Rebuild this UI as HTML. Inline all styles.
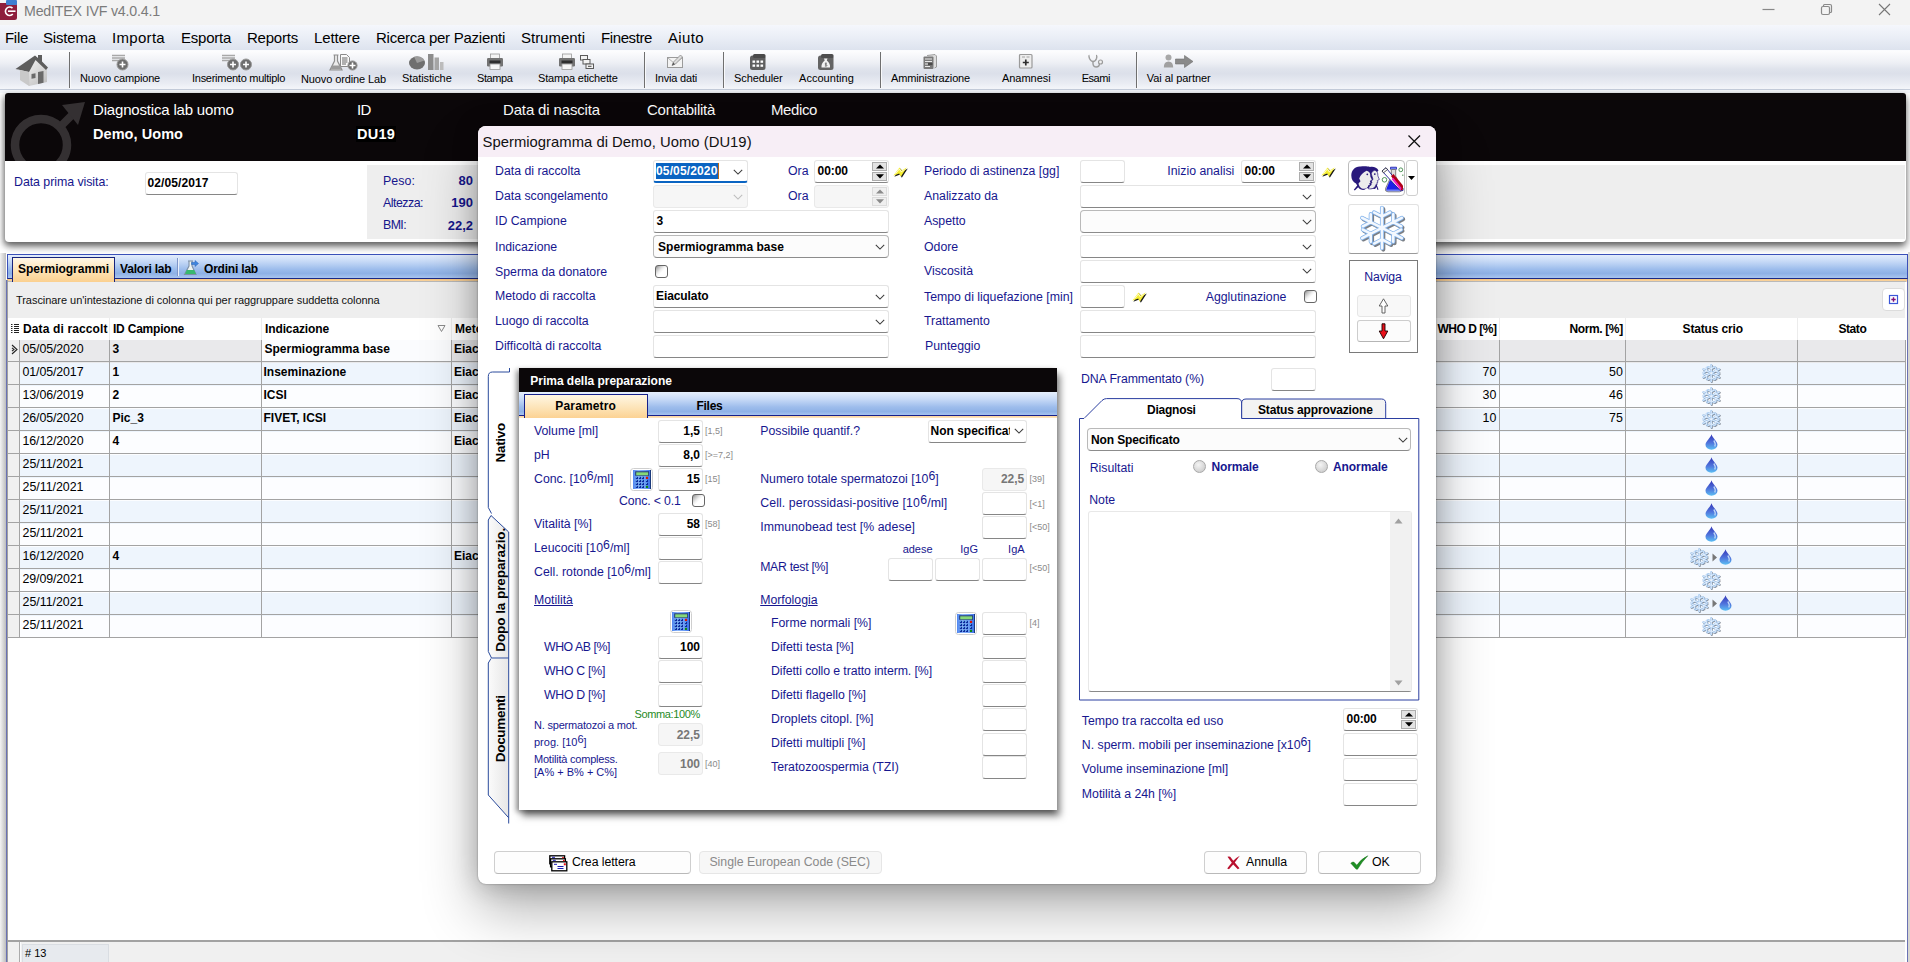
<!DOCTYPE html>
<html lang="it"><head><meta charset="utf-8"><title>MedITEX IVF v4.0.4.1</title>
<style>
html,body{margin:0;padding:0;}
body{width:1910px;height:962px;overflow:hidden;position:relative;background:#fff;font-family:"Liberation Sans",sans-serif;color:#000;}
.b{position:absolute;box-sizing:border-box;}
.t{position:absolute;white-space:pre;line-height:1;}
.inp{background:#fff;border:1px solid #e4e4e4;border-bottom:1px solid #868686;border-radius:3px;}
.dis{background:#f6f6f6;border:1px solid #e9e9e9;border-radius:3px;}
.cmbr{background:#fcfcfc;border:1px solid #b9b9b9;border-bottom:1px solid #8c8c8c;border-radius:4px;}

</style></head>
<body>
<div class="b" style="left:0px;top:0px;width:1910px;height:25px;background:#f3f3f3;"></div>
<svg class="b" style="left:0px;top:0px;" width="18" height="20" viewBox="0 0 18 20"><rect x="-4" y="3" width="21" height="17" rx="2.5" fill="#8e1f3c"/><rect x="6" y="0" width="11" height="5" rx="1" fill="#3f7fd0"/><path d="M12.5 8.2A4.2 4.2 0 1 0 12.8 14" stroke="#fff" stroke-width="1.6" fill="none"/><path d="M8 11.2H15.5" stroke="#fff" stroke-width="1.6"/></svg>
<span class="t" style="left:24px;top:4px;font-size:14.2px;letter-spacing:-0.18px;color:#7b7b7b;">MedITEX IVF v4.0.4.1</span>
<svg class="b" style="left:1755px;top:-1px;" width="155" height="24" viewBox="0 0 155 24"><path d="M7.500 10.500H19.500" stroke="#888" stroke-width="1.200"/><rect x="66.500" y="7.500" width="8" height="8" rx="1.500" fill="none" stroke="#8a8a8a" stroke-width="1.200"/><path d="M68.500 7.500V6.500Q68.500 5.500 69.500 5.500H75Q76.500 5.500 76.500 7V12.500Q76.500 13.500 75.500 13.500H74.500" fill="none" stroke="#8a8a8a" stroke-width="1.200"/><path d="M124 5L135 16M135 5L124 16" stroke="#777" stroke-width="1.100"/></svg>
<div class="b" style="left:0px;top:25px;width:1910px;height:25px;background:linear-gradient(#f5f7fc,#eaeef6 50%,#dde3ee);"></div>
<div class="b" style="left:0px;top:50px;width:1910px;height:1px;background:#fbfcfe;"></div>
<span class="t" style="left:5px;top:30px;font-size:15px;letter-spacing:-0.29px;color:#000;">File</span>
<span class="t" style="left:43px;top:30px;font-size:15px;letter-spacing:-0.17px;color:#000;">Sistema</span>
<span class="t" style="left:112px;top:30px;font-size:15px;letter-spacing:0.31px;color:#000;">Importa</span>
<span class="t" style="left:181px;top:30px;font-size:15px;letter-spacing:-0.24px;color:#000;">Esporta</span>
<span class="t" style="left:247px;top:30px;font-size:15px;letter-spacing:-0.22px;color:#000;">Reports</span>
<span class="t" style="left:314px;top:30px;font-size:15px;letter-spacing:-0.1px;color:#000;">Lettere</span>
<span class="t" style="left:376px;top:30px;font-size:15px;letter-spacing:-0.26px;color:#000;">Ricerca per Pazienti</span>
<span class="t" style="left:521px;top:30px;font-size:15px;letter-spacing:-0.02px;color:#000;">Strumenti</span>
<span class="t" style="left:601px;top:30px;font-size:15px;letter-spacing:-0.4px;color:#000;">Finestre</span>
<span class="t" style="left:668px;top:30px;font-size:15px;letter-spacing:0.36px;color:#000;">Aiuto</span>
<div class="b" style="left:0px;top:51px;width:1910px;height:39px;background:linear-gradient(#fdfdfe 0%,#eef0f5 30%,#dfe3ec 48%,#dce0ea 60%,#e9ecf3 85%,#f4f6fa 100%);border-bottom:1px solid #c5cddb;box-sizing:border-box;"></div>
<div class="b" style="left:0px;top:90px;width:1910px;height:3px;background:#f4f6fa;"></div>
<div class="b" style="left:69px;top:52px;width:1px;height:36px;background:#6f6f6f;"></div>
<div class="b" style="left:70px;top:52px;width:1px;height:36px;background:#f8f9fb;"></div>
<div class="b" style="left:644px;top:52px;width:1px;height:36px;background:#6f6f6f;"></div>
<div class="b" style="left:645px;top:52px;width:1px;height:36px;background:#f8f9fb;"></div>
<div class="b" style="left:723px;top:52px;width:1px;height:36px;background:#6f6f6f;"></div>
<div class="b" style="left:724px;top:52px;width:1px;height:36px;background:#f8f9fb;"></div>
<div class="b" style="left:880px;top:52px;width:1px;height:36px;background:#6f6f6f;"></div>
<div class="b" style="left:881px;top:52px;width:1px;height:36px;background:#f8f9fb;"></div>
<div class="b" style="left:1136px;top:52px;width:1px;height:36px;background:#6f6f6f;"></div>
<div class="b" style="left:1137px;top:52px;width:1px;height:36px;background:#f8f9fb;"></div>
<span class="t" style="left:80px;top:73px;font-size:11px;letter-spacing:-0.18px;color:#000;">Nuovo campione</span>
<span class="t" style="left:192px;top:73px;font-size:11px;letter-spacing:-0.27px;color:#000;">Inserimento multiplo</span>
<span class="t" style="left:301px;top:74px;font-size:11px;letter-spacing:-0.12px;color:#000;">Nuovo ordine Lab</span>
<span class="t" style="left:402px;top:73px;font-size:11px;letter-spacing:-0.1px;color:#000;">Statistiche</span>
<span class="t" style="left:477px;top:73px;font-size:11px;letter-spacing:-0.42px;color:#000;">Stampa</span>
<span class="t" style="left:538px;top:73px;font-size:11px;letter-spacing:-0.18px;color:#000;">Stampa etichette</span>
<span class="t" style="left:655px;top:73px;font-size:11px;letter-spacing:-0.2px;color:#000;">Invia dati</span>
<span class="t" style="left:734px;top:73px;font-size:11px;letter-spacing:-0.1px;color:#000;">Scheduler</span>
<span class="t" style="left:799px;top:73px;font-size:11px;letter-spacing:0.04px;color:#000;">Accounting</span>
<span class="t" style="left:891px;top:73px;font-size:11px;letter-spacing:-0.15px;color:#000;">Amministrazione</span>
<span class="t" style="left:1002px;top:73px;font-size:11px;letter-spacing:-0.04px;color:#000;">Anamnesi</span>
<span class="t" style="left:1081.7px;top:73px;font-size:11px;letter-spacing:-0.45px;color:#000;">Esami</span>
<span class="t" style="left:1146.7px;top:73px;font-size:11px;letter-spacing:-0.04px;color:#000;">Vai al partner</span>
<svg class="b" style="left:14px;top:53px;" width="36" height="34" viewBox="0 0 36 34"><defs><linearGradient id="hg" x1="0" y1="0" x2="1" y2="1"><stop offset="0" stop-color="#fafafa"/><stop offset="1" stop-color="#bdbdbd"/></linearGradient></defs>
<path d="M6 17L22 6L33 17V29L15 33L6 27Z" fill="url(#hg)"/>
<path d="M1.500 16L21 2.500L24 5V2H28V8.500L34 14.500L32 17L21.500 7L15 19Z" fill="#5d5d5d"/>
<path d="M1.500 16L15 19L15.500 33L6 27V17.500Z" fill="#c9c9c9"/>
<path d="M24 19L29.500 18V29.800L24 31Z" fill="#6a6a6a"/><path d="M17.500 21L21.500 20.300V25L17.500 25.800Z" fill="#6a6a6a"/></svg>
<svg class="b" style="left:112px;top:54px;" width="18" height="18" viewBox="0 0 18 18"><path d="M0 1.500H13M0 4H13M0 6.500H8" stroke="#a8a8a8" stroke-width="1.400"/><circle cx="10.5" cy="10.5" r="5.5" fill="#6e6e6e"/><circle cx="10.5" cy="10.5" r="5.5" fill="none" stroke="#9a9a9a" stroke-width="1"/><path d="M7.5 10.5h6M10.5 7.5v6" stroke="#fff" stroke-width="1.600"/></svg>
<svg class="b" style="left:222px;top:54px;" width="32" height="18" viewBox="0 0 32 18"><path d="M0 1.500H13M0 4H13M0 6.500H8" stroke="#a8a8a8" stroke-width="1.400"/><circle cx="11" cy="10.5" r="5.5" fill="#6e6e6e"/><circle cx="11" cy="10.5" r="5.5" fill="none" stroke="#9a9a9a" stroke-width="1"/><path d="M8 10.5h6M11 7.5v6" stroke="#fff" stroke-width="1.600"/><circle cx="24" cy="10.5" r="5.5" fill="#6e6e6e"/><circle cx="24" cy="10.5" r="5.5" fill="none" stroke="#9a9a9a" stroke-width="1"/><path d="M21 10.5h6M24 7.5v6" stroke="#fff" stroke-width="1.600"/></svg>
<svg class="b" style="left:328px;top:53px;" width="32" height="19" viewBox="0 0 32 19"><path d="M5.500 2H10.500M6.500 2V8L2 17H14L9.500 8V2" fill="#ececec" stroke="#8f8f8f" stroke-width="1.200"/><path d="M4.500 12.500H11.500L13.500 16.500H2.500Z" fill="#9a9a9a"/>
<path d="M12.500 1.500H18.500L21.500 4.500V13.500H12.500Z" fill="#fafafa" stroke="#8a8a8a"/><path d="M14 5H19.500M14 7H19.500M14 9H19.500M14 11H18" stroke="#555" stroke-width="0.900"/><circle cx="24.5" cy="12.5" r="4.6" fill="#6e6e6e"/><circle cx="24.5" cy="12.5" r="4.6" fill="none" stroke="#9a9a9a" stroke-width="1"/><path d="M21.5 12.5h6M24.5 9.5v6" stroke="#fff" stroke-width="1.600"/></svg>
<svg class="b" style="left:408px;top:53px;" width="36" height="18" viewBox="0 0 36 18"><ellipse cx="9" cy="10" rx="8" ry="6.500" fill="#6f6f6f"/><path d="M9 10L6 3.800A8 6.500 0 0 1 16.500 7.500Z" fill="#9c9c9c"/>
<rect x="20" y="1" width="5.500" height="16" fill="#8c8c8c"/><rect x="26.500" y="4.500" width="4.500" height="12.500" fill="#a5a5a5"/><rect x="32" y="9" width="3.500" height="8" fill="#bcbcbc"/></svg>
<svg class="b" style="left:487px;top:53px;" width="18" height="18" viewBox="0 0 18 18"><rect x="3.5" y="1" width="9" height="5" fill="#f4f4f4" stroke="#9a9a9a" stroke-width="0.800"/><rect x="0" y="5" width="16" height="8.500" rx="1.200" fill="#737373"/><rect x="2.5" y="7.500" width="11" height="3" fill="#2e2e2e"/><rect x="3" y="11" width="10" height="5.500" fill="#f6f6f6" stroke="#9a9a9a" stroke-width="0.800"/></svg>
<svg class="b" style="left:559px;top:53px;" width="38" height="18" viewBox="0 0 38 18"><rect x="3.5" y="1" width="9" height="5" fill="#f4f4f4" stroke="#9a9a9a" stroke-width="0.800"/><rect x="0" y="5" width="16" height="8.500" rx="1.200" fill="#737373"/><rect x="2.5" y="7.500" width="11" height="3" fill="#2e2e2e"/><rect x="3" y="11" width="10" height="5.500" fill="#f6f6f6" stroke="#9a9a9a" stroke-width="0.800"/><g fill="#f2f2f2" stroke="#5a5a5a" stroke-width="1"><rect x="21.500" y="2.500" width="7" height="4.500"/><rect x="24" y="6.500" width="7" height="4.500"/><rect x="27" y="11" width="7.500" height="4.500"/></g><path d="M29 13.300H32.500" stroke="#444"/></svg>
<svg class="b" style="left:666px;top:53px;" width="19" height="17" viewBox="0 0 19 17"><rect x="1.500" y="4.500" width="15" height="10" fill="#f3f3f3" stroke="#9b9b9b"/><path d="M2 5L8.500 10.500L16 5" fill="none" stroke="#b3b3b3"/><path d="M6 12.500L7.500 9L14.500 2L16.500 4L9.500 11Z" fill="#dcdcdc" stroke="#8a8a8a" stroke-width="0.800"/><path d="M6 12.500L7.300 9.600L9 11.300Z" fill="#555"/></svg>
<svg class="b" style="left:749px;top:53px;" width="18" height="18" viewBox="0 0 18 18"><rect x="1" y="2.500" width="15.500" height="14.500" rx="2.500" fill="#5f5f5f"/><rect x="4" y="1" width="12.500" height="4" rx="1.500" fill="#4a4a4a"/><g fill="#fff"><rect x="3.500" y="7.500" width="2.600" height="2.300"/><rect x="7.500" y="7.500" width="2.600" height="2.300"/><rect x="11.500" y="7.500" width="2.600" height="2.300"/><rect x="3.500" y="11.500" width="2.600" height="2.300"/><rect x="7.500" y="11.500" width="2.600" height="2.300"/><rect x="11.500" y="11.500" width="2.600" height="2.300"/></g></svg>
<svg class="b" style="left:817px;top:53px;" width="18" height="18" viewBox="0 0 18 18"><rect x="1" y="2.500" width="15.500" height="14.500" rx="2.500" fill="#646464"/><rect x="4" y="1" width="12.500" height="4" rx="1.500" fill="#4e4e4e"/><path d="M7 5.500H10.500L9.800 7.500Q13.500 10.500 13 14.500H4.500Q4 10.500 7.700 7.500Z" fill="#f1f1f1"/><path d="M8.800 9.500V13.500M10 10.300Q8 9.800 8 11Q8 11.700 9.500 11.800Q10.500 12 9.800 13H7.800" stroke="#666" stroke-width="0.700" fill="none"/></svg>
<svg class="b" style="left:922px;top:53px;" width="17" height="18" viewBox="0 0 17 18"><path d="M5 2.500L13 1.500L14.500 3V14L12.500 15" fill="#dedede" stroke="#8a8a8a" stroke-width="0.800"/><rect x="1.500" y="3.500" width="10" height="12.500" rx="1" fill="#7a7a7a"/><path d="M3 6H10M3 8.500H10M3 11H10M3 13.500H8" stroke="#e9e9e9" stroke-width="1.200"/><rect x="6" y="9.800" width="4.500" height="2.400" fill="#4a4a4a"/></svg>
<svg class="b" style="left:1018px;top:53px;" width="16" height="17" viewBox="0 0 16 17"><rect x="1.500" y="1.500" width="12.500" height="13.500" rx="1" fill="#ededed" stroke="#9a9a9a" stroke-width="1.200"/><path d="M4 4H7M8.500 4H11.500" stroke="#9a9a9a" stroke-width="0.900"/><path d="M7.800 6.500V12.500M4.800 9.500H10.800" stroke="#2e2e2e" stroke-width="1.700"/></svg>
<svg class="b" style="left:1086px;top:53px;" width="19" height="17" viewBox="0 0 19 17"><path d="M3.500 2.500Q2.500 2.500 3.500 5.500Q5 8.500 7 8.500Q9.500 8.500 10.500 5.500Q11.300 2.500 10 2.500" fill="none" stroke="#9c9c9c" stroke-width="1.400"/><path d="M7 8.500Q6.500 14 10 14Q13.500 14 13.500 10.500" fill="none" stroke="#9c9c9c" stroke-width="1.400"/><circle cx="14.500" cy="9" r="2" fill="#f0f0f0" stroke="#9c9c9c" stroke-width="1.200"/></svg>
<svg class="b" style="left:1163px;top:53px;" width="32" height="18" viewBox="0 0 32 18"><circle cx="5.500" cy="4.500" r="3" fill="#a8a8a8"/><path d="M0.800 14.500Q0.800 8.500 5.500 8.500Q10.200 8.500 10.200 14.500Z" fill="#a0a0a0"/><path d="M12.500 6H21.500V2.500L30 8.500L21.500 14.500V11H12.500Z" fill="#8a8a8a" stroke="#6e6e6e" stroke-width="0.600"/></svg>
<div class="b" style="left:5px;top:93px;width:1901px;height:149px;background:#fff;border-radius:3px 3px 4px 4px;box-shadow:-1px 3px 6px rgba(0,0,0,.5), 1px 5px 8px rgba(0,0,0,.3);"></div>
<div class="b" style="left:5px;top:93px;width:1901px;height:68px;background:#0b0709;border-radius:3px 3px 0 0;"></div>
<div class="b" style="left:367px;top:165px;width:1538px;height:73.5px;background:#eeeeee;"></div>
<svg class="b" style="left:5px;top:93px;" width="100" height="68" viewBox="0 0 100 68"><g fill="none" stroke="#343032" stroke-width="8.500"><circle cx="36" cy="52" r="26"/><path d="M55 34L70 19" stroke-width="8"/></g><path d="M57 12L80 9L73 32Z" fill="#343032"/></svg>
<span class="t" style="left:93px;top:102px;font-size:15px;letter-spacing:-0.18px;color:#fff;">Diagnostica lab uomo</span>
<span class="t" style="left:93px;top:127px;font-size:14.5px;letter-spacing:0.06px;font-weight:bold;color:#fff;">Demo, Uomo</span>
<span class="t" style="left:357px;top:102px;font-size:15px;letter-spacing:-0.75px;color:#fff;">ID</span>
<div class="b" style="left:356px;top:126px;width:40px;height:16px;background:#000;"></div>
<span class="t" style="left:357px;top:127px;font-size:14.5px;letter-spacing:0.23px;font-weight:bold;color:#fff;">DU19</span>
<span class="t" style="left:503px;top:102px;font-size:15px;letter-spacing:-0.15px;color:#fff;">Data di nascita</span>
<span class="t" style="left:647px;top:102px;font-size:15px;letter-spacing:-0.26px;color:#fff;">Contabilità</span>
<span class="t" style="left:771px;top:102px;font-size:15px;letter-spacing:-0.39px;color:#fff;">Medico</span>
<span class="t" style="left:14px;top:176px;font-size:12.4px;letter-spacing:-0.06px;color:#16168c;">Data prima visita:</span>
<div class="b inp" style="left:145px;top:172px;width:93px;height:23px;"></div>
<span class="t" style="left:147.5px;top:177px;font-size:12px;letter-spacing:0.09px;font-weight:bold;">02/05/2017</span>
<span class="t" style="left:383px;top:175px;font-size:12.4px;letter-spacing:0.06px;color:#16168c;">Peso:</span>
<span class="t" style="left:383px;top:197px;font-size:12.4px;letter-spacing:-0.51px;color:#16168c;">Altezza:</span>
<span class="t" style="left:383px;top:219px;font-size:12.4px;letter-spacing:-0.62px;color:#16168c;">BMI:</span>
<span class="t" style="left:458.54px;top:174px;font-size:13px;font-weight:bold;color:#16168c;">80</span>
<span class="t" style="left:451.31px;top:196px;font-size:13px;font-weight:bold;color:#16168c;">190</span>
<span class="t" style="left:447.7px;top:219px;font-size:13px;font-weight:bold;color:#16168c;">22,2</span>
<div class="b" style="left:7px;top:254px;width:1901px;height:25px;background:linear-gradient(#e3edfc 0%,#c4d8f6 30%,#9dbdec 62%,#8eb1e6 80%,#a9c5f0 100%);border:1px solid #3a50b8;border-bottom:1px solid #1b2a86;"></div>
<div class="b" style="left:7px;top:279px;width:1900px;height:2.5px;background:linear-gradient(#f7c582,#fbdcae);"></div>
<div class="b" style="left:8px;top:281.3px;width:1898px;height:0.8px;background:#b9b9b9;"></div>
<div class="b" style="left:12px;top:257px;width:103px;height:24.5px;background:linear-gradient(#fff7e6,#fde3b4 55%,#fbd08f);border:1px solid #18247c;border-bottom:none;"></div>
<span class="t" style="left:18px;top:263px;font-size:12px;letter-spacing:-0.03px;font-weight:bold;">Spermiogrammi</span>
<span class="t" style="left:120px;top:263px;font-size:12px;letter-spacing:-0.19px;font-weight:bold;">Valori lab</span>
<div class="b" style="left:177px;top:258px;width:1px;height:18px;background:#7e95c9;"></div>
<div class="b" style="left:178px;top:258px;width:1px;height:18px;background:#e9f0fc;"></div>
<svg class="b" style="left:182px;top:259px;" width="18" height="18" viewBox="0 0 18 18"><path d="M6 2H11M7 2V7L2.500 15.500H14L10 7V2" fill="#eef4f1" stroke="#7d8fa6" stroke-width="1.100"/><path d="M4.800 11H12.200L14 15H3Z" fill="#38b86e"/><path d="M9.500 3.500H13V1.500L16.500 4.500L13 7.500V5.500H9.500Z" fill="#3f86e0" stroke="#2a62b5" stroke-width="0.500"/></svg>
<span class="t" style="left:204px;top:263px;font-size:12px;letter-spacing:-0.2px;font-weight:bold;">Ordini lab</span>
<div class="b" style="left:0px;top:253px;width:6px;height:709px;background:linear-gradient(90deg,#f4f4f4,#d6d6d6 55%,#bdbdbd);"></div>
<div class="b" style="left:6px;top:280px;width:1.2px;height:682px;background:#6a72b4;"></div>
<div class="b" style="left:7.2px;top:280px;width:0.8px;height:682px;background:#a0a0a0;"></div>
<div class="b" style="left:1906.7px;top:279px;width:1.3px;height:683px;background:#6a72b4;"></div>
<div class="b" style="left:1908px;top:252px;width:2px;height:710px;background:#d8d6d0;"></div>
<div class="b" style="left:8px;top:282px;width:1897px;height:36px;background:#eeeeee;"></div>
<span class="t" style="left:16px;top:295px;font-size:11px;letter-spacing:-0.05px;color:#111;">Trascinare un'intestazione di colonna qui per raggruppare suddetta colonna</span>
<div class="b" style="left:1882px;top:288px;width:22.5px;height:22.5px;background:#fff;border:1px solid #dcdcdc;border-radius:4px;"></div>
<svg class="b" style="left:1888px;top:294px;" width="12" height="12" viewBox="0 0 12 12"><rect x="1.500" y="1.500" width="8" height="8" fill="#fff" stroke="#3a56d8" stroke-width="1.200"/><path d="M5.500 3.300V7.700M3.300 5.500H7.700" stroke="#80107a" stroke-width="1.400"/></svg>
<div class="b" style="left:8px;top:318px;width:1897px;height:21.5px;background:#fff;"></div>
<div class="b" style="left:8px;top:339.5px;width:1897px;height:23px;background:#e9e9eb;"></div>
<div class="b" style="left:8px;top:339.5px;width:11px;height:23px;background:#f0f0f0;"></div>
<div class="b" style="left:8px;top:361px;width:1897px;height:1px;background:#a3a3a3;"></div>
<div class="b" style="left:8px;top:362.5px;width:1897px;height:23px;background:#eef5fd;"></div>
<div class="b" style="left:8px;top:362.5px;width:11px;height:23px;background:#f0f0f0;"></div>
<div class="b" style="left:8px;top:384px;width:1897px;height:1px;background:#a3a3a3;"></div>
<div class="b" style="left:8px;top:385.5px;width:1897px;height:23px;background:#fcfdff;"></div>
<div class="b" style="left:8px;top:385.5px;width:11px;height:23px;background:#f0f0f0;"></div>
<div class="b" style="left:8px;top:407px;width:1897px;height:1px;background:#a3a3a3;"></div>
<div class="b" style="left:8px;top:408.5px;width:1897px;height:23px;background:#eef5fd;"></div>
<div class="b" style="left:8px;top:408.5px;width:11px;height:23px;background:#f0f0f0;"></div>
<div class="b" style="left:8px;top:430px;width:1897px;height:1px;background:#a3a3a3;"></div>
<div class="b" style="left:8px;top:431.5px;width:1897px;height:23px;background:#fcfdff;"></div>
<div class="b" style="left:8px;top:431.5px;width:11px;height:23px;background:#f0f0f0;"></div>
<div class="b" style="left:8px;top:453px;width:1897px;height:1px;background:#a3a3a3;"></div>
<div class="b" style="left:8px;top:454.5px;width:1897px;height:23px;background:#eef5fd;"></div>
<div class="b" style="left:8px;top:454.5px;width:11px;height:23px;background:#f0f0f0;"></div>
<div class="b" style="left:8px;top:476px;width:1897px;height:1px;background:#a3a3a3;"></div>
<div class="b" style="left:8px;top:477.5px;width:1897px;height:23px;background:#fcfdff;"></div>
<div class="b" style="left:8px;top:477.5px;width:11px;height:23px;background:#f0f0f0;"></div>
<div class="b" style="left:8px;top:499px;width:1897px;height:1px;background:#a3a3a3;"></div>
<div class="b" style="left:8px;top:500.5px;width:1897px;height:23px;background:#eef5fd;"></div>
<div class="b" style="left:8px;top:500.5px;width:11px;height:23px;background:#f0f0f0;"></div>
<div class="b" style="left:8px;top:522px;width:1897px;height:1px;background:#a3a3a3;"></div>
<div class="b" style="left:8px;top:523.5px;width:1897px;height:23px;background:#fcfdff;"></div>
<div class="b" style="left:8px;top:523.5px;width:11px;height:23px;background:#f0f0f0;"></div>
<div class="b" style="left:8px;top:545px;width:1897px;height:1px;background:#a3a3a3;"></div>
<div class="b" style="left:8px;top:546.5px;width:1897px;height:23px;background:#eef5fd;"></div>
<div class="b" style="left:8px;top:546.5px;width:11px;height:23px;background:#f0f0f0;"></div>
<div class="b" style="left:8px;top:568px;width:1897px;height:1px;background:#a3a3a3;"></div>
<div class="b" style="left:8px;top:569.5px;width:1897px;height:23px;background:#fcfdff;"></div>
<div class="b" style="left:8px;top:569.5px;width:11px;height:23px;background:#f0f0f0;"></div>
<div class="b" style="left:8px;top:591px;width:1897px;height:1px;background:#a3a3a3;"></div>
<div class="b" style="left:8px;top:592.5px;width:1897px;height:23px;background:#eef5fd;"></div>
<div class="b" style="left:8px;top:592.5px;width:11px;height:23px;background:#f0f0f0;"></div>
<div class="b" style="left:8px;top:614px;width:1897px;height:1px;background:#a3a3a3;"></div>
<div class="b" style="left:8px;top:615.5px;width:1897px;height:23px;background:#fcfdff;"></div>
<div class="b" style="left:8px;top:615.5px;width:11px;height:23px;background:#f0f0f0;"></div>
<div class="b" style="left:8px;top:637px;width:1897px;height:1px;background:#a3a3a3;"></div>
<div class="b" style="left:262px;top:339.5px;width:189px;height:21.5px;background:#fbfcfe;"></div>
<div class="b" style="left:19px;top:339.5px;width:1px;height:298px;background:#a3a3a3;"></div>
<div class="b" style="left:109px;top:339.5px;width:1px;height:298px;background:#a3a3a3;"></div>
<div class="b" style="left:261px;top:339.5px;width:1px;height:298px;background:#a3a3a3;"></div>
<div class="b" style="left:451px;top:339.5px;width:1px;height:298px;background:#a3a3a3;"></div>
<div class="b" style="left:1499px;top:339.5px;width:1px;height:298px;background:#a3a3a3;"></div>
<div class="b" style="left:1625px;top:339.5px;width:1px;height:298px;background:#a3a3a3;"></div>
<div class="b" style="left:1797px;top:339.5px;width:1px;height:298px;background:#a3a3a3;"></div>
<div class="b" style="left:1905px;top:339.5px;width:1px;height:298px;background:#a3a3a3;"></div>
<div class="b" style="left:109px;top:318px;width:1px;height:21.5px;background:#ececec;"></div>
<div class="b" style="left:261px;top:318px;width:1px;height:21.5px;background:#ececec;"></div>
<div class="b" style="left:451px;top:318px;width:1px;height:21.5px;background:#ececec;"></div>
<div class="b" style="left:1499px;top:318px;width:1px;height:21.5px;background:#ececec;"></div>
<div class="b" style="left:1625px;top:318px;width:1px;height:21.5px;background:#ececec;"></div>
<div class="b" style="left:1797px;top:318px;width:1px;height:21.5px;background:#ececec;"></div>
<svg class="b" style="left:11px;top:323px;" width="9" height="11" viewBox="0 0 9 11"><path d="M0 1.500H1.500M3 1.500H8M0 3.500H1.500M3 3.500H8M0 5.500H1.500M3 5.500H8M0 7.500H1.500M3 7.500H8M0 9.500H1.500M3 9.500H8" stroke="#222" stroke-width="1"/></svg>
<div class="b" style="left:20px;top:318px;width:88px;height:21px;overflow:hidden;">
<span class="t" style="left:3px;top:5px;font-size:12px;letter-spacing:0.13px;font-weight:bold;">Data di raccolta</span>
</div>
<span class="t" style="left:113px;top:323px;font-size:12px;letter-spacing:-0.21px;font-weight:bold;">ID Campione</span>
<span class="t" style="left:265px;top:323px;font-size:12px;letter-spacing:-0.12px;font-weight:bold;">Indicazione</span>
<svg class="b" style="left:437px;top:323.5px;" width="9" height="9" viewBox="0 0 9 9"><path d="M1 1.500H8L4.500 7.500Z" fill="none" stroke="#8a8a8a" stroke-width="1"/></svg>
<span class="t" style="left:455px;top:323px;font-size:12px;letter-spacing:0.06px;font-weight:bold;">Metodo</span>
<span class="t" style="left:1437.5px;top:323px;font-size:12px;letter-spacing:-0.48px;font-weight:bold;">WHO D [%]</span>
<span class="t" style="left:1569.6px;top:323px;font-size:12px;letter-spacing:-0.39px;font-weight:bold;">Norm. [%]</span>
<span class="t" style="left:1682.55px;top:323px;font-size:12px;letter-spacing:-0.16px;font-weight:bold;">Status crio</span>
<span class="t" style="left:1838.5px;top:323px;font-size:12px;letter-spacing:-0.44px;font-weight:bold;">Stato</span>
<svg class="b" style="left:11px;top:344px;" width="8" height="11" viewBox="0 0 8 11"><path d="M1 1L6 5.500L1 10M1 3.800L3 5.500L1 7.200" fill="none" stroke="#222" stroke-width="1.100"/></svg>
<span class="t" style="left:22.5px;top:343px;font-size:12.4px;letter-spacing:-0.11px;">05/05/2020</span>
<span class="t" style="left:112.5px;top:343px;font-size:12px;font-weight:bold;">3</span>
<span class="t" style="left:264.5px;top:343px;font-size:12px;font-weight:bold;">Spermiogramma base</span>
<div class="b" style="left:452px;top:338.7px;width:30px;height:20px;overflow:hidden;">
<span class="t" style="left:2px;top:4px;font-size:12px;font-weight:bold;">Eiaculato</span>
</div>
<span class="t" style="left:22.5px;top:366px;font-size:12.4px;letter-spacing:-0.11px;">01/05/2017</span>
<span class="t" style="left:112.5px;top:366px;font-size:12px;font-weight:bold;">1</span>
<span class="t" style="left:263.5px;top:366px;font-size:12px;font-weight:bold;">Inseminazione</span>
<div class="b" style="left:452px;top:361.7px;width:30px;height:20px;overflow:hidden;">
<span class="t" style="left:2px;top:4px;font-size:12px;font-weight:bold;">Eiaculato</span>
</div>
<span class="t" style="left:1482.61px;top:366px;font-size:12.4px;">70</span>
<span class="t" style="left:1609.01px;top:366px;font-size:12.4px;">50</span>
<svg class="b" style="left:1699.18px;top:360.58px;" width="24.43" height="24.43" viewBox="0 0 24.43 24.43"><g transform="translate(12.22,12.22)" fill="none" stroke-linecap="round" stroke-linejoin="round"><path transform="translate(0.6,0.6)" d="M0 0L0.00 -8.20M0.00 -4.64L3.21 -6.28M0.00 -4.64L-3.21 -6.28M0 0L-8.02 -4.10M-4.54 -2.32L-4.54 -5.60M-4.54 -2.32L-7.75 -0.68M0 0L-8.02 4.10M-4.54 2.32L-7.75 0.68M-4.54 2.32L-4.54 5.60M0 0L-0.00 8.20M-0.00 4.64L-3.21 6.28M-0.00 4.64L3.21 6.28M0 0L8.02 4.10M4.54 2.32L4.54 5.60M4.54 2.32L7.75 0.68M0 0L8.02 -4.10M4.54 -2.32L7.75 -0.68M4.54 -2.32L4.54 -5.60" stroke="#6c727a" stroke-width="1.9" opacity="0.85"/><path d="M0 0L0.00 -8.20M0.00 -4.64L3.21 -6.28M0.00 -4.64L-3.21 -6.28M0 0L-8.02 -4.10M-4.54 -2.32L-4.54 -5.60M-4.54 -2.32L-7.75 -0.68M0 0L-8.02 4.10M-4.54 2.32L-7.75 0.68M-4.54 2.32L-4.54 5.60M0 0L-0.00 8.20M-0.00 4.64L-3.21 6.28M-0.00 4.64L3.21 6.28M0 0L8.02 4.10M4.54 2.32L4.54 5.60M4.54 2.32L7.75 0.68M0 0L8.02 -4.10M4.54 -2.32L7.75 -0.68M4.54 -2.32L4.54 -5.60" stroke="#9cc3ee" stroke-width="1.9"/><path d="M0 0L0.00 -8.20M0.00 -4.64L3.21 -6.28M0.00 -4.64L-3.21 -6.28M0 0L-8.02 -4.10M-4.54 -2.32L-4.54 -5.60M-4.54 -2.32L-7.75 -0.68M0 0L-8.02 4.10M-4.54 2.32L-7.75 0.68M-4.54 2.32L-4.54 5.60M0 0L-0.00 8.20M-0.00 4.64L-3.21 6.28M-0.00 4.64L3.21 6.28M0 0L8.02 4.10M4.54 2.32L4.54 5.60M4.54 2.32L7.75 0.68M0 0L8.02 -4.10M4.54 -2.32L7.75 -0.68M4.54 -2.32L4.54 -5.60" stroke="#edf5fd" stroke-width="0.8"/></g></svg>
<span class="t" style="left:22.5px;top:389px;font-size:12.4px;letter-spacing:-0.11px;">13/06/2019</span>
<span class="t" style="left:112.5px;top:389px;font-size:12px;font-weight:bold;">2</span>
<span class="t" style="left:263.5px;top:389px;font-size:12px;font-weight:bold;">ICSI</span>
<div class="b" style="left:452px;top:384.7px;width:30px;height:20px;overflow:hidden;">
<span class="t" style="left:2px;top:4px;font-size:12px;font-weight:bold;">Eiaculato</span>
</div>
<span class="t" style="left:1482.61px;top:389px;font-size:12.4px;">30</span>
<span class="t" style="left:1609.01px;top:389px;font-size:12.4px;">46</span>
<svg class="b" style="left:1699.18px;top:383.58px;" width="24.43" height="24.43" viewBox="0 0 24.43 24.43"><g transform="translate(12.22,12.22)" fill="none" stroke-linecap="round" stroke-linejoin="round"><path transform="translate(0.6,0.6)" d="M0 0L0.00 -8.20M0.00 -4.64L3.21 -6.28M0.00 -4.64L-3.21 -6.28M0 0L-8.02 -4.10M-4.54 -2.32L-4.54 -5.60M-4.54 -2.32L-7.75 -0.68M0 0L-8.02 4.10M-4.54 2.32L-7.75 0.68M-4.54 2.32L-4.54 5.60M0 0L-0.00 8.20M-0.00 4.64L-3.21 6.28M-0.00 4.64L3.21 6.28M0 0L8.02 4.10M4.54 2.32L4.54 5.60M4.54 2.32L7.75 0.68M0 0L8.02 -4.10M4.54 -2.32L7.75 -0.68M4.54 -2.32L4.54 -5.60" stroke="#6c727a" stroke-width="1.9" opacity="0.85"/><path d="M0 0L0.00 -8.20M0.00 -4.64L3.21 -6.28M0.00 -4.64L-3.21 -6.28M0 0L-8.02 -4.10M-4.54 -2.32L-4.54 -5.60M-4.54 -2.32L-7.75 -0.68M0 0L-8.02 4.10M-4.54 2.32L-7.75 0.68M-4.54 2.32L-4.54 5.60M0 0L-0.00 8.20M-0.00 4.64L-3.21 6.28M-0.00 4.64L3.21 6.28M0 0L8.02 4.10M4.54 2.32L4.54 5.60M4.54 2.32L7.75 0.68M0 0L8.02 -4.10M4.54 -2.32L7.75 -0.68M4.54 -2.32L4.54 -5.60" stroke="#9cc3ee" stroke-width="1.9"/><path d="M0 0L0.00 -8.20M0.00 -4.64L3.21 -6.28M0.00 -4.64L-3.21 -6.28M0 0L-8.02 -4.10M-4.54 -2.32L-4.54 -5.60M-4.54 -2.32L-7.75 -0.68M0 0L-8.02 4.10M-4.54 2.32L-7.75 0.68M-4.54 2.32L-4.54 5.60M0 0L-0.00 8.20M-0.00 4.64L-3.21 6.28M-0.00 4.64L3.21 6.28M0 0L8.02 4.10M4.54 2.32L4.54 5.60M4.54 2.32L7.75 0.68M0 0L8.02 -4.10M4.54 -2.32L7.75 -0.68M4.54 -2.32L4.54 -5.60" stroke="#edf5fd" stroke-width="0.8"/></g></svg>
<span class="t" style="left:22.5px;top:412px;font-size:12.4px;letter-spacing:-0.11px;">26/05/2020</span>
<span class="t" style="left:112.5px;top:412px;font-size:12px;font-weight:bold;">Pic_3</span>
<span class="t" style="left:263.5px;top:412px;font-size:12px;font-weight:bold;">FIVET, ICSI</span>
<div class="b" style="left:452px;top:407.7px;width:30px;height:20px;overflow:hidden;">
<span class="t" style="left:2px;top:4px;font-size:12px;font-weight:bold;">Eiaculato</span>
</div>
<span class="t" style="left:1482.61px;top:412px;font-size:12.4px;">10</span>
<span class="t" style="left:1609.01px;top:412px;font-size:12.4px;">75</span>
<svg class="b" style="left:1699.18px;top:406.58px;" width="24.43" height="24.43" viewBox="0 0 24.43 24.43"><g transform="translate(12.22,12.22)" fill="none" stroke-linecap="round" stroke-linejoin="round"><path transform="translate(0.6,0.6)" d="M0 0L0.00 -8.20M0.00 -4.64L3.21 -6.28M0.00 -4.64L-3.21 -6.28M0 0L-8.02 -4.10M-4.54 -2.32L-4.54 -5.60M-4.54 -2.32L-7.75 -0.68M0 0L-8.02 4.10M-4.54 2.32L-7.75 0.68M-4.54 2.32L-4.54 5.60M0 0L-0.00 8.20M-0.00 4.64L-3.21 6.28M-0.00 4.64L3.21 6.28M0 0L8.02 4.10M4.54 2.32L4.54 5.60M4.54 2.32L7.75 0.68M0 0L8.02 -4.10M4.54 -2.32L7.75 -0.68M4.54 -2.32L4.54 -5.60" stroke="#6c727a" stroke-width="1.9" opacity="0.85"/><path d="M0 0L0.00 -8.20M0.00 -4.64L3.21 -6.28M0.00 -4.64L-3.21 -6.28M0 0L-8.02 -4.10M-4.54 -2.32L-4.54 -5.60M-4.54 -2.32L-7.75 -0.68M0 0L-8.02 4.10M-4.54 2.32L-7.75 0.68M-4.54 2.32L-4.54 5.60M0 0L-0.00 8.20M-0.00 4.64L-3.21 6.28M-0.00 4.64L3.21 6.28M0 0L8.02 4.10M4.54 2.32L4.54 5.60M4.54 2.32L7.75 0.68M0 0L8.02 -4.10M4.54 -2.32L7.75 -0.68M4.54 -2.32L4.54 -5.60" stroke="#9cc3ee" stroke-width="1.9"/><path d="M0 0L0.00 -8.20M0.00 -4.64L3.21 -6.28M0.00 -4.64L-3.21 -6.28M0 0L-8.02 -4.10M-4.54 -2.32L-4.54 -5.60M-4.54 -2.32L-7.75 -0.68M0 0L-8.02 4.10M-4.54 2.32L-7.75 0.68M-4.54 2.32L-4.54 5.60M0 0L-0.00 8.20M-0.00 4.64L-3.21 6.28M-0.00 4.64L3.21 6.28M0 0L8.02 4.10M4.54 2.32L4.54 5.60M4.54 2.32L7.75 0.68M0 0L8.02 -4.10M4.54 -2.32L7.75 -0.68M4.54 -2.32L4.54 -5.60" stroke="#edf5fd" stroke-width="0.8"/></g></svg>
<span class="t" style="left:22.5px;top:435px;font-size:12.4px;letter-spacing:-0.11px;">16/12/2020</span>
<span class="t" style="left:112.5px;top:435px;font-size:12px;font-weight:bold;">4</span>
<div class="b" style="left:452px;top:430.7px;width:30px;height:20px;overflow:hidden;">
<span class="t" style="left:2px;top:4px;font-size:12px;font-weight:bold;">Eiaculato</span>
</div>
<svg class="b" style="left:1704.5px;top:433.8px;" width="13" height="16" viewBox="0 0 13 16"><defs><linearGradient id="dg26" x1="0" y1="0" x2="0" y2="1"><stop offset="0" stop-color="#3436b8"/><stop offset="0.550" stop-color="#4f74dc"/><stop offset="1" stop-color="#5cc0f4"/></linearGradient></defs><path d="M6.500 0.300C7.500 4 12.500 7.500 12.500 10.800A6 5 0 0 1 0.500 10.800C0.500 7.500 5.500 4 6.500 0.300Z" fill="url(#dg26)"/><path d="M8.800 6.500Q11 9.500 9.800 12.500" stroke="#cfe6fb" stroke-width="1.300" fill="none" opacity="0.850"/></svg>
<span class="t" style="left:22.5px;top:458px;font-size:12.4px;letter-spacing:-0.01px;">25/11/2021</span>
<svg class="b" style="left:1704.5px;top:456.8px;" width="13" height="16" viewBox="0 0 13 16"><defs><linearGradient id="dg27" x1="0" y1="0" x2="0" y2="1"><stop offset="0" stop-color="#3436b8"/><stop offset="0.550" stop-color="#4f74dc"/><stop offset="1" stop-color="#5cc0f4"/></linearGradient></defs><path d="M6.500 0.300C7.500 4 12.500 7.500 12.500 10.800A6 5 0 0 1 0.500 10.800C0.500 7.500 5.500 4 6.500 0.300Z" fill="url(#dg27)"/><path d="M8.800 6.500Q11 9.500 9.800 12.500" stroke="#cfe6fb" stroke-width="1.300" fill="none" opacity="0.850"/></svg>
<span class="t" style="left:22.5px;top:481px;font-size:12.4px;letter-spacing:-0.01px;">25/11/2021</span>
<svg class="b" style="left:1704.5px;top:479.8px;" width="13" height="16" viewBox="0 0 13 16"><defs><linearGradient id="dg28" x1="0" y1="0" x2="0" y2="1"><stop offset="0" stop-color="#3436b8"/><stop offset="0.550" stop-color="#4f74dc"/><stop offset="1" stop-color="#5cc0f4"/></linearGradient></defs><path d="M6.500 0.300C7.500 4 12.500 7.500 12.500 10.800A6 5 0 0 1 0.500 10.800C0.500 7.500 5.500 4 6.500 0.300Z" fill="url(#dg28)"/><path d="M8.800 6.500Q11 9.500 9.800 12.500" stroke="#cfe6fb" stroke-width="1.300" fill="none" opacity="0.850"/></svg>
<span class="t" style="left:22.5px;top:504px;font-size:12.4px;letter-spacing:-0.01px;">25/11/2021</span>
<svg class="b" style="left:1704.5px;top:502.8px;" width="13" height="16" viewBox="0 0 13 16"><defs><linearGradient id="dg29" x1="0" y1="0" x2="0" y2="1"><stop offset="0" stop-color="#3436b8"/><stop offset="0.550" stop-color="#4f74dc"/><stop offset="1" stop-color="#5cc0f4"/></linearGradient></defs><path d="M6.500 0.300C7.500 4 12.500 7.500 12.500 10.800A6 5 0 0 1 0.500 10.800C0.500 7.500 5.500 4 6.500 0.300Z" fill="url(#dg29)"/><path d="M8.800 6.500Q11 9.500 9.800 12.500" stroke="#cfe6fb" stroke-width="1.300" fill="none" opacity="0.850"/></svg>
<span class="t" style="left:22.5px;top:527px;font-size:12.4px;letter-spacing:-0.01px;">25/11/2021</span>
<svg class="b" style="left:1704.5px;top:525.8px;" width="13" height="16" viewBox="0 0 13 16"><defs><linearGradient id="dg30" x1="0" y1="0" x2="0" y2="1"><stop offset="0" stop-color="#3436b8"/><stop offset="0.550" stop-color="#4f74dc"/><stop offset="1" stop-color="#5cc0f4"/></linearGradient></defs><path d="M6.500 0.300C7.500 4 12.500 7.500 12.500 10.800A6 5 0 0 1 0.500 10.800C0.500 7.500 5.500 4 6.500 0.300Z" fill="url(#dg30)"/><path d="M8.800 6.500Q11 9.500 9.800 12.500" stroke="#cfe6fb" stroke-width="1.300" fill="none" opacity="0.850"/></svg>
<span class="t" style="left:22.5px;top:550px;font-size:12.4px;letter-spacing:-0.11px;">16/12/2020</span>
<span class="t" style="left:112.5px;top:550px;font-size:12px;font-weight:bold;">4</span>
<div class="b" style="left:452px;top:545.7px;width:30px;height:20px;overflow:hidden;">
<span class="t" style="left:2px;top:4px;font-size:12px;font-weight:bold;">Eiaculato</span>
</div>
<svg class="b" style="left:1687.28px;top:544.58px;" width="24.43" height="24.43" viewBox="0 0 24.43 24.43"><g transform="translate(12.22,12.22)" fill="none" stroke-linecap="round" stroke-linejoin="round"><path transform="translate(0.6,0.6)" d="M0 0L0.00 -8.20M0.00 -4.64L3.21 -6.28M0.00 -4.64L-3.21 -6.28M0 0L-8.02 -4.10M-4.54 -2.32L-4.54 -5.60M-4.54 -2.32L-7.75 -0.68M0 0L-8.02 4.10M-4.54 2.32L-7.75 0.68M-4.54 2.32L-4.54 5.60M0 0L-0.00 8.20M-0.00 4.64L-3.21 6.28M-0.00 4.64L3.21 6.28M0 0L8.02 4.10M4.54 2.32L4.54 5.60M4.54 2.32L7.75 0.68M0 0L8.02 -4.10M4.54 -2.32L7.75 -0.68M4.54 -2.32L4.54 -5.60" stroke="#6c727a" stroke-width="1.9" opacity="0.85"/><path d="M0 0L0.00 -8.20M0.00 -4.64L3.21 -6.28M0.00 -4.64L-3.21 -6.28M0 0L-8.02 -4.10M-4.54 -2.32L-4.54 -5.60M-4.54 -2.32L-7.75 -0.68M0 0L-8.02 4.10M-4.54 2.32L-7.75 0.68M-4.54 2.32L-4.54 5.60M0 0L-0.00 8.20M-0.00 4.64L-3.21 6.28M-0.00 4.64L3.21 6.28M0 0L8.02 4.10M4.54 2.32L4.54 5.60M4.54 2.32L7.75 0.68M0 0L8.02 -4.10M4.54 -2.32L7.75 -0.68M4.54 -2.32L4.54 -5.60" stroke="#9cc3ee" stroke-width="1.9"/><path d="M0 0L0.00 -8.20M0.00 -4.64L3.21 -6.28M0.00 -4.64L-3.21 -6.28M0 0L-8.02 -4.10M-4.54 -2.32L-4.54 -5.60M-4.54 -2.32L-7.75 -0.68M0 0L-8.02 4.10M-4.54 2.32L-7.75 0.68M-4.54 2.32L-4.54 5.60M0 0L-0.00 8.20M-0.00 4.64L-3.21 6.28M-0.00 4.64L3.21 6.28M0 0L8.02 4.10M4.54 2.32L4.54 5.60M4.54 2.32L7.75 0.68M0 0L8.02 -4.10M4.54 -2.32L7.75 -0.68M4.54 -2.32L4.54 -5.60" stroke="#edf5fd" stroke-width="0.8"/></g></svg>
<svg class="b" style="left:1718.5px;top:548.8px;" width="13" height="16" viewBox="0 0 13 16"><defs><linearGradient id="dg32" x1="0" y1="0" x2="0" y2="1"><stop offset="0" stop-color="#3436b8"/><stop offset="0.550" stop-color="#4f74dc"/><stop offset="1" stop-color="#5cc0f4"/></linearGradient></defs><path d="M6.500 0.300C7.500 4 12.500 7.500 12.500 10.800A6 5 0 0 1 0.500 10.800C0.500 7.500 5.500 4 6.500 0.300Z" fill="url(#dg32)"/><path d="M8.800 6.500Q11 9.500 9.800 12.500" stroke="#cfe6fb" stroke-width="1.300" fill="none" opacity="0.850"/></svg>
<svg class="b" style="left:1711.5px;top:552.8px;" width="6" height="9" viewBox="0 0 6 9"><path d="M0.500 0.500L5 4.500L0.500 8.500Z" fill="#777"/></svg>
<span class="t" style="left:22.5px;top:573px;font-size:12.4px;letter-spacing:-0.11px;">29/09/2021</span>
<svg class="b" style="left:1699.18px;top:567.58px;" width="24.43" height="24.43" viewBox="0 0 24.43 24.43"><g transform="translate(12.22,12.22)" fill="none" stroke-linecap="round" stroke-linejoin="round"><path transform="translate(0.6,0.6)" d="M0 0L0.00 -8.20M0.00 -4.64L3.21 -6.28M0.00 -4.64L-3.21 -6.28M0 0L-8.02 -4.10M-4.54 -2.32L-4.54 -5.60M-4.54 -2.32L-7.75 -0.68M0 0L-8.02 4.10M-4.54 2.32L-7.75 0.68M-4.54 2.32L-4.54 5.60M0 0L-0.00 8.20M-0.00 4.64L-3.21 6.28M-0.00 4.64L3.21 6.28M0 0L8.02 4.10M4.54 2.32L4.54 5.60M4.54 2.32L7.75 0.68M0 0L8.02 -4.10M4.54 -2.32L7.75 -0.68M4.54 -2.32L4.54 -5.60" stroke="#6c727a" stroke-width="1.9" opacity="0.85"/><path d="M0 0L0.00 -8.20M0.00 -4.64L3.21 -6.28M0.00 -4.64L-3.21 -6.28M0 0L-8.02 -4.10M-4.54 -2.32L-4.54 -5.60M-4.54 -2.32L-7.75 -0.68M0 0L-8.02 4.10M-4.54 2.32L-7.75 0.68M-4.54 2.32L-4.54 5.60M0 0L-0.00 8.20M-0.00 4.64L-3.21 6.28M-0.00 4.64L3.21 6.28M0 0L8.02 4.10M4.54 2.32L4.54 5.60M4.54 2.32L7.75 0.68M0 0L8.02 -4.10M4.54 -2.32L7.75 -0.68M4.54 -2.32L4.54 -5.60" stroke="#9cc3ee" stroke-width="1.9"/><path d="M0 0L0.00 -8.20M0.00 -4.64L3.21 -6.28M0.00 -4.64L-3.21 -6.28M0 0L-8.02 -4.10M-4.54 -2.32L-4.54 -5.60M-4.54 -2.32L-7.75 -0.68M0 0L-8.02 4.10M-4.54 2.32L-7.75 0.68M-4.54 2.32L-4.54 5.60M0 0L-0.00 8.20M-0.00 4.64L-3.21 6.28M-0.00 4.64L3.21 6.28M0 0L8.02 4.10M4.54 2.32L4.54 5.60M4.54 2.32L7.75 0.68M0 0L8.02 -4.10M4.54 -2.32L7.75 -0.68M4.54 -2.32L4.54 -5.60" stroke="#edf5fd" stroke-width="0.8"/></g></svg>
<span class="t" style="left:22.5px;top:596px;font-size:12.4px;letter-spacing:-0.01px;">25/11/2021</span>
<svg class="b" style="left:1687.28px;top:590.58px;" width="24.43" height="24.43" viewBox="0 0 24.43 24.43"><g transform="translate(12.22,12.22)" fill="none" stroke-linecap="round" stroke-linejoin="round"><path transform="translate(0.6,0.6)" d="M0 0L0.00 -8.20M0.00 -4.64L3.21 -6.28M0.00 -4.64L-3.21 -6.28M0 0L-8.02 -4.10M-4.54 -2.32L-4.54 -5.60M-4.54 -2.32L-7.75 -0.68M0 0L-8.02 4.10M-4.54 2.32L-7.75 0.68M-4.54 2.32L-4.54 5.60M0 0L-0.00 8.20M-0.00 4.64L-3.21 6.28M-0.00 4.64L3.21 6.28M0 0L8.02 4.10M4.54 2.32L4.54 5.60M4.54 2.32L7.75 0.68M0 0L8.02 -4.10M4.54 -2.32L7.75 -0.68M4.54 -2.32L4.54 -5.60" stroke="#6c727a" stroke-width="1.9" opacity="0.85"/><path d="M0 0L0.00 -8.20M0.00 -4.64L3.21 -6.28M0.00 -4.64L-3.21 -6.28M0 0L-8.02 -4.10M-4.54 -2.32L-4.54 -5.60M-4.54 -2.32L-7.75 -0.68M0 0L-8.02 4.10M-4.54 2.32L-7.75 0.68M-4.54 2.32L-4.54 5.60M0 0L-0.00 8.20M-0.00 4.64L-3.21 6.28M-0.00 4.64L3.21 6.28M0 0L8.02 4.10M4.54 2.32L4.54 5.60M4.54 2.32L7.75 0.68M0 0L8.02 -4.10M4.54 -2.32L7.75 -0.68M4.54 -2.32L4.54 -5.60" stroke="#9cc3ee" stroke-width="1.9"/><path d="M0 0L0.00 -8.20M0.00 -4.64L3.21 -6.28M0.00 -4.64L-3.21 -6.28M0 0L-8.02 -4.10M-4.54 -2.32L-4.54 -5.60M-4.54 -2.32L-7.75 -0.68M0 0L-8.02 4.10M-4.54 2.32L-7.75 0.68M-4.54 2.32L-4.54 5.60M0 0L-0.00 8.20M-0.00 4.64L-3.21 6.28M-0.00 4.64L3.21 6.28M0 0L8.02 4.10M4.54 2.32L4.54 5.60M4.54 2.32L7.75 0.68M0 0L8.02 -4.10M4.54 -2.32L7.75 -0.68M4.54 -2.32L4.54 -5.60" stroke="#edf5fd" stroke-width="0.8"/></g></svg>
<svg class="b" style="left:1718.5px;top:594.8px;" width="13" height="16" viewBox="0 0 13 16"><defs><linearGradient id="dg36" x1="0" y1="0" x2="0" y2="1"><stop offset="0" stop-color="#3436b8"/><stop offset="0.550" stop-color="#4f74dc"/><stop offset="1" stop-color="#5cc0f4"/></linearGradient></defs><path d="M6.500 0.300C7.500 4 12.500 7.500 12.500 10.800A6 5 0 0 1 0.500 10.800C0.500 7.500 5.500 4 6.500 0.300Z" fill="url(#dg36)"/><path d="M8.800 6.500Q11 9.500 9.800 12.500" stroke="#cfe6fb" stroke-width="1.300" fill="none" opacity="0.850"/></svg>
<svg class="b" style="left:1711.5px;top:598.8px;" width="6" height="9" viewBox="0 0 6 9"><path d="M0.500 0.500L5 4.500L0.500 8.500Z" fill="#777"/></svg>
<span class="t" style="left:22.5px;top:619px;font-size:12.4px;letter-spacing:-0.01px;">25/11/2021</span>
<svg class="b" style="left:1699.18px;top:613.58px;" width="24.43" height="24.43" viewBox="0 0 24.43 24.43"><g transform="translate(12.22,12.22)" fill="none" stroke-linecap="round" stroke-linejoin="round"><path transform="translate(0.6,0.6)" d="M0 0L0.00 -8.20M0.00 -4.64L3.21 -6.28M0.00 -4.64L-3.21 -6.28M0 0L-8.02 -4.10M-4.54 -2.32L-4.54 -5.60M-4.54 -2.32L-7.75 -0.68M0 0L-8.02 4.10M-4.54 2.32L-7.75 0.68M-4.54 2.32L-4.54 5.60M0 0L-0.00 8.20M-0.00 4.64L-3.21 6.28M-0.00 4.64L3.21 6.28M0 0L8.02 4.10M4.54 2.32L4.54 5.60M4.54 2.32L7.75 0.68M0 0L8.02 -4.10M4.54 -2.32L7.75 -0.68M4.54 -2.32L4.54 -5.60" stroke="#6c727a" stroke-width="1.9" opacity="0.85"/><path d="M0 0L0.00 -8.20M0.00 -4.64L3.21 -6.28M0.00 -4.64L-3.21 -6.28M0 0L-8.02 -4.10M-4.54 -2.32L-4.54 -5.60M-4.54 -2.32L-7.75 -0.68M0 0L-8.02 4.10M-4.54 2.32L-7.75 0.68M-4.54 2.32L-4.54 5.60M0 0L-0.00 8.20M-0.00 4.64L-3.21 6.28M-0.00 4.64L3.21 6.28M0 0L8.02 4.10M4.54 2.32L4.54 5.60M4.54 2.32L7.75 0.68M0 0L8.02 -4.10M4.54 -2.32L7.75 -0.68M4.54 -2.32L4.54 -5.60" stroke="#9cc3ee" stroke-width="1.9"/><path d="M0 0L0.00 -8.20M0.00 -4.64L3.21 -6.28M0.00 -4.64L-3.21 -6.28M0 0L-8.02 -4.10M-4.54 -2.32L-4.54 -5.60M-4.54 -2.32L-7.75 -0.68M0 0L-8.02 4.10M-4.54 2.32L-7.75 0.68M-4.54 2.32L-4.54 5.60M0 0L-0.00 8.20M-0.00 4.64L-3.21 6.28M-0.00 4.64L3.21 6.28M0 0L8.02 4.10M4.54 2.32L4.54 5.60M4.54 2.32L7.75 0.68M0 0L8.02 -4.10M4.54 -2.32L7.75 -0.68M4.54 -2.32L4.54 -5.60" stroke="#edf5fd" stroke-width="0.8"/></g></svg>
<div class="b" style="left:8px;top:638px;width:1897px;height:302px;background:#fff;"></div>
<div class="b" style="left:8px;top:940px;width:1897px;height:1.5px;background:#a2a2a2;"></div>
<div class="b" style="left:8px;top:941.5px;width:1897px;height:21px;background:#f0f0f0;"></div>
<div class="b" style="left:19px;top:942px;width:1px;height:20px;background:#ababab;"></div>
<div class="b" style="left:20px;top:942px;width:1px;height:20px;background:#fbfcfe;"></div>
<div class="b" style="left:22px;top:943.5px;width:86.5px;height:19px;background:#e7eaee;border:1px solid #d9dde2;"></div>
<span class="t" style="left:25px;top:948px;font-size:11px;letter-spacing:0.02px;"># 13</span>
<div class="b" style="left:478px;top:126px;width:958px;height:758px;background:#fff;border-radius:8px;box-shadow:0 0 2px rgba(0,0,0,.4),0 26px 56px rgba(0,0,0,.30),0 2px 26px rgba(0,0,0,.22);"></div>
<div class="b" style="left:478px;top:126px;width:958px;height:31px;background:#f7eef6;border-radius:8px 8px 0 0;"></div>
<span class="t" style="left:482.5px;top:135px;font-size:14.8px;letter-spacing:0.03px;color:#111;">Spermiogramma di Demo, Uomo (DU19)</span>
<svg class="b" style="left:1407px;top:134px;" width="15" height="15" viewBox="0 0 15 15"><path d="M1.500 1.500L13 13M13 1.500L1.500 13" stroke="#111" stroke-width="1.300"/></svg>
<span class="t" style="left:495px;top:165px;font-size:12.3px;color:#17178f;">Data di raccolta</span>
<span class="t" style="left:495px;top:190px;font-size:12.3px;color:#17178f;">Data scongelamento</span>
<span class="t" style="left:495px;top:215px;font-size:12.3px;color:#17178f;">ID Campione</span>
<span class="t" style="left:495px;top:241px;font-size:12.3px;color:#17178f;">Indicazione</span>
<span class="t" style="left:495px;top:266px;font-size:12.3px;color:#17178f;">Sperma da donatore</span>
<span class="t" style="left:495px;top:290px;font-size:12.3px;color:#17178f;">Metodo di raccolta</span>
<span class="t" style="left:495px;top:315px;font-size:12.3px;color:#17178f;">Luogo di raccolta</span>
<span class="t" style="left:495px;top:340px;font-size:12.3px;color:#17178f;">Difficoltà di raccolta</span>
<div class="b inp" style="left:653px;top:160px;width:95px;height:23px;border-bottom:2px solid #0a64c2;"></div>
<div class="b" style="left:655.5px;top:163px;width:62.5px;height:16px;background:#0a64c2;"></div>
<span class="t" style="left:656px;top:165px;font-size:12px;letter-spacing:0.14px;font-weight:bold;color:#fff;">05/05/2020</span>
<div class="b" style="left:717.5px;top:163px;width:1px;height:16px;background:#c06a10;"></div>
<svg class="b" style="left:733.2px;top:168.5px;" width="10" height="6" viewBox="0 0 10 6"><path d="M0.800 0.800L5 5L9.200 0.800" fill="none" stroke="#3c3c3c" stroke-width="1.050"/></svg>
<span class="t" style="left:788px;top:165px;font-size:12.3px;color:#17178f;">Ora</span>
<div class="b inp" style="left:814px;top:160px;width:75px;height:23px;"></div>
<span class="t" style="left:817.5px;top:165px;font-size:12px;letter-spacing:-0.04px;font-weight:bold;">00:00</span>
<div class="b" style="left:872px;top:162px;width:15px;height:9px;background:#e3e3e3;border:1px solid #adadad;"></div>
<svg class="b" style="left:875.5px;top:164px;" width="8" height="5" viewBox="0 0 8 5"><path d="M0 4.600L4 0.400L8 4.600Z" fill="#000"/></svg>
<div class="b" style="left:872px;top:172px;width:15px;height:9px;background:#e3e3e3;border:1px solid #adadad;"></div>
<svg class="b" style="left:875.5px;top:174.4px;" width="8" height="5" viewBox="0 0 8 5"><path d="M0 0.200L4 4.400L8 0.200Z" fill="#000"/></svg>
<svg class="b" style="left:893.3px;top:166.8px;" width="16" height="13" viewBox="0 0 16 13"><path d="M1.300 9.700L7.500 1.500L9.500 4.400L14.800 1.500L8.800 10.700L7.200 7.400Z" fill="#1a1a1a"/><path d="M0.300 8.700L6.500 0.500L8.500 3.400L13.800 0.500L7.800 9.700L6.200 6.400Z" fill="#f6ee32"/><path d="M2.500 6.800L6.400 2L8.200 4.800L11.500 2.600" fill="none" stroke="#fffde0" stroke-width="0.900"/></svg>
<div class="b dis" style="left:653px;top:185px;width:95px;height:23px;"></div>
<svg class="b" style="left:733.2px;top:193.5px;" width="10" height="6" viewBox="0 0 10 6"><path d="M0.800 0.800L5 5L9.200 0.800" fill="none" stroke="#bdbdbd" stroke-width="1.050"/></svg>
<span class="t" style="left:788px;top:190px;font-size:12.3px;color:#17178f;">Ora</span>
<div class="b dis" style="left:814px;top:185px;width:75px;height:23px;"></div>
<div class="b" style="left:872px;top:187px;width:15px;height:9px;background:#efefef;border:1px solid #dcdcdc;"></div>
<svg class="b" style="left:875.5px;top:189px;" width="8" height="5" viewBox="0 0 8 5"><path d="M0 4.600L4 0.400L8 4.600Z" fill="#8a8a8a"/></svg>
<div class="b" style="left:872px;top:197px;width:15px;height:9px;background:#efefef;border:1px solid #dcdcdc;"></div>
<svg class="b" style="left:875.5px;top:199.4px;" width="8" height="5" viewBox="0 0 8 5"><path d="M0 0.200L4 4.400L8 0.200Z" fill="#8a8a8a"/></svg>
<div class="b inp" style="left:653px;top:210px;width:236px;height:23px;"></div>
<span class="t" style="left:656.5px;top:215px;font-size:12px;font-weight:bold;">3</span>
<div class="b cmbr" style="left:653px;top:235px;width:236px;height:23px;"></div>
<span class="t" style="left:658px;top:241px;font-size:12px;letter-spacing:0.03px;font-weight:bold;">Spermiogramma base</span>
<svg class="b" style="left:875px;top:243.5px;" width="10" height="6" viewBox="0 0 10 6"><path d="M0.800 0.800L5 5L9.200 0.800" fill="none" stroke="#3c3c3c" stroke-width="1.050"/></svg>
<div class="b" style="left:655px;top:265px;width:13px;height:13px;background:linear-gradient(135deg,#8c8c8c 0%,#c4c4c4 20%,#efefef 40%,#fff 54%);border:1px solid #666;border-radius:3px;"></div>
<div class="b inp" style="left:653px;top:285px;width:236px;height:23px;"></div>
<span class="t" style="left:656px;top:290px;font-size:12px;letter-spacing:-0.09px;font-weight:bold;">Eiaculato</span>
<svg class="b" style="left:875px;top:293.5px;" width="10" height="6" viewBox="0 0 10 6"><path d="M0.800 0.800L5 5L9.200 0.800" fill="none" stroke="#3c3c3c" stroke-width="1.050"/></svg>
<div class="b inp" style="left:653px;top:310px;width:236px;height:23px;"></div>
<svg class="b" style="left:875px;top:318.5px;" width="10" height="6" viewBox="0 0 10 6"><path d="M0.800 0.800L5 5L9.200 0.800" fill="none" stroke="#3c3c3c" stroke-width="1.050"/></svg>
<div class="b inp" style="left:653px;top:335px;width:236px;height:23px;"></div>
<span class="t" style="left:924px;top:165px;font-size:12.3px;color:#17178f;">Periodo di astinenza [gg]</span>
<span class="t" style="left:924px;top:190px;font-size:12.3px;color:#17178f;">Analizzato da</span>
<span class="t" style="left:924px;top:215px;font-size:12.3px;color:#17178f;">Aspetto</span>
<span class="t" style="left:924px;top:241px;font-size:12.3px;color:#17178f;">Odore</span>
<span class="t" style="left:924px;top:265px;font-size:12.3px;color:#17178f;">Viscosità</span>
<span class="t" style="left:924px;top:291px;font-size:12.3px;color:#17178f;">Tempo di liquefazione [min]</span>
<span class="t" style="left:924px;top:315px;font-size:12.3px;color:#17178f;">Trattamento</span>
<span class="t" style="left:925px;top:340px;font-size:12.3px;color:#17178f;">Punteggio</span>
<div class="b inp" style="left:1080px;top:160px;width:45px;height:23px;"></div>
<span class="t" style="left:1167.3px;top:165px;font-size:12.3px;color:#17178f;">Inizio analisi</span>
<div class="b inp" style="left:1241px;top:160px;width:75px;height:23px;"></div>
<span class="t" style="left:1244.5px;top:165px;font-size:12px;letter-spacing:-0.04px;font-weight:bold;">00:00</span>
<div class="b" style="left:1299px;top:162px;width:15px;height:9px;background:#e3e3e3;border:1px solid #adadad;"></div>
<svg class="b" style="left:1302.5px;top:164px;" width="8" height="5" viewBox="0 0 8 5"><path d="M0 4.600L4 0.400L8 4.600Z" fill="#000"/></svg>
<div class="b" style="left:1299px;top:172px;width:15px;height:9px;background:#e3e3e3;border:1px solid #adadad;"></div>
<svg class="b" style="left:1302.5px;top:174.4px;" width="8" height="5" viewBox="0 0 8 5"><path d="M0 0.200L4 4.400L8 0.200Z" fill="#000"/></svg>
<svg class="b" style="left:1321px;top:166.6px;" width="16" height="13" viewBox="0 0 16 13"><path d="M1.300 9.700L7.500 1.500L9.500 4.400L14.800 1.500L8.800 10.700L7.200 7.400Z" fill="#1a1a1a"/><path d="M0.300 8.700L6.500 0.500L8.500 3.400L13.800 0.500L7.800 9.700L6.200 6.400Z" fill="#f6ee32"/><path d="M2.500 6.800L6.400 2L8.200 4.800L11.500 2.600" fill="none" stroke="#fffde0" stroke-width="0.900"/></svg>
<div class="b inp" style="left:1080px;top:185px;width:236px;height:23px;"></div>
<svg class="b" style="left:1302px;top:193.5px;" width="10" height="6" viewBox="0 0 10 6"><path d="M0.800 0.800L5 5L9.200 0.800" fill="none" stroke="#3c3c3c" stroke-width="1.050"/></svg>
<div class="b cmbr" style="left:1080px;top:210px;width:236px;height:23px;"></div>
<svg class="b" style="left:1302px;top:218.5px;" width="10" height="6" viewBox="0 0 10 6"><path d="M0.800 0.800L5 5L9.200 0.800" fill="none" stroke="#3c3c3c" stroke-width="1.050"/></svg>
<div class="b inp" style="left:1080px;top:235px;width:236px;height:23px;"></div>
<svg class="b" style="left:1302px;top:243.5px;" width="10" height="6" viewBox="0 0 10 6"><path d="M0.800 0.800L5 5L9.200 0.800" fill="none" stroke="#3c3c3c" stroke-width="1.050"/></svg>
<div class="b inp" style="left:1080px;top:260px;width:236px;height:23px;"></div>
<svg class="b" style="left:1302px;top:268.3px;" width="10" height="6" viewBox="0 0 10 6"><path d="M0.800 0.800L5 5L9.200 0.800" fill="none" stroke="#3c3c3c" stroke-width="1.050"/></svg>
<div class="b inp" style="left:1080px;top:285px;width:45px;height:23px;"></div>
<svg class="b" style="left:1132px;top:291.6px;" width="16" height="13" viewBox="0 0 16 13"><path d="M1.300 9.700L7.500 1.500L9.500 4.400L14.800 1.500L8.800 10.700L7.200 7.400Z" fill="#1a1a1a"/><path d="M0.300 8.700L6.500 0.500L8.500 3.400L13.800 0.500L7.800 9.700L6.200 6.400Z" fill="#f6ee32"/><path d="M2.500 6.800L6.400 2L8.200 4.800L11.500 2.600" fill="none" stroke="#fffde0" stroke-width="0.900"/></svg>
<span class="t" style="left:1205.7px;top:291px;font-size:12.3px;color:#17178f;">Agglutinazione</span>
<div class="b" style="left:1304px;top:290px;width:13px;height:13px;background:linear-gradient(135deg,#8c8c8c 0%,#c4c4c4 20%,#efefef 40%,#fff 54%);border:1px solid #666;border-radius:3px;"></div>
<div class="b inp" style="left:1080px;top:310px;width:236px;height:23px;"></div>
<div class="b inp" style="left:1080px;top:335px;width:236px;height:23px;"></div>
<span class="t" style="left:1081px;top:373px;font-size:12.3px;letter-spacing:-0.07px;color:#17178f;">DNA Frammentato (%)</span>
<div class="b inp" style="left:1271px;top:368px;width:45px;height:23px;"></div>
<svg class="b" style="left:484px;top:364px;" width="38" height="464" viewBox="0 0 38 464">
<defs><linearGradient id="vt" x1="0" y1="0" x2="1" y2="0"><stop offset="0" stop-color="#fbfbfb"/><stop offset="1" stop-color="#e6e6e6"/></linearGradient></defs>
<path d="M4.300 156L7 151.500L24.700 168V294H7.500L4.300 287.500Z" fill="url(#vt)"/>
<path d="M4.300 299L7 294.500H24.700V453.800L4.300 431Z" fill="url(#vt)"/>
<path d="M25.500 4V8H8.500Q4.300 8 4.300 12.500V143.500L7.500 149.500" fill="none" stroke="#2a4a9c" stroke-width="1"/>
<path d="M4.300 287.500V156L7 151.500L24.700 168V294H7.500L4.300 287.500" fill="none" stroke="#2a4a9c" stroke-width="1"/>
<path d="M24.700 294V459.500M24.700 453.800L4.300 431V299L7 294.500" fill="none" stroke="#2a4a9c" stroke-width="1"/>
</svg>
<span class="t" style="left:480.5px;top:435.85px;width:39.6px;height:13.5px;font-size:13.5px;transform:rotate(-90deg);transform-origin:50% 50%;text-align:center;letter-spacing:-0.28px;font-weight:bold;color:#000;">Nativo</span>
<span class="t" style="left:438.8px;top:583.25px;width:124px;height:13.5px;font-size:13.5px;transform:rotate(-90deg);transform-origin:50% 50%;text-align:center;letter-spacing:-0.07px;font-weight:bold;color:#000;">Dopo la preparazio.</span>
<span class="t" style="left:467px;top:721.75px;width:67px;height:13.5px;font-size:13.5px;transform:rotate(-90deg);transform-origin:50% 50%;text-align:center;letter-spacing:-0.31px;font-weight:bold;color:#000;">Documenti</span>
<div class="b" style="left:519px;top:368.2px;width:538px;height:442.3px;background:#fff;box-shadow:-3px 2px 5px rgba(0,0,0,.38),3px 6px 7px rgba(0,0,0,.5);"></div>
<div class="b" style="left:519px;top:368px;width:538px;height:24px;background:#0b0709;"></div>
<span class="t" style="left:530.3px;top:375px;font-size:12px;letter-spacing:-0.02px;font-weight:bold;color:#fff;">Prima della preparazione</span>
<div class="b" style="left:519px;top:392px;width:538px;height:23.5px;background:linear-gradient(#e6effc 0%,#c9dbf7 30%,#9ebdec 65%,#8fb2e7 85%,#a6c3ef 100%);border-bottom:1px solid #16208a;"></div>
<div class="b" style="left:519px;top:415.5px;width:538px;height:2.5px;background:linear-gradient(#fcd49a,#fde7c4);"></div>
<div class="b" style="left:524px;top:394px;width:124px;height:24px;background:linear-gradient(#fff6e3,#fde4b8 55%,#fcd293);border:1px solid #16208a;border-bottom:none;"></div>
<span class="t" style="left:555.35px;top:400px;font-size:12px;letter-spacing:0.15px;font-weight:bold;">Parametro</span>
<span class="t" style="left:696.5px;top:400px;font-size:12px;letter-spacing:-0.27px;font-weight:bold;">Files</span>
<span class="t" style="left:534px;top:425px;font-size:12.3px;color:#17178f;">Volume [ml]</span>
<div class="b inp" style="left:658px;top:420px;width:45px;height:23px;"></div>
<span class="t" style="left:683.32px;top:425px;font-size:12px;font-weight:bold;color:#000;">1,5</span>
<span class="t" style="left:705px;top:427px;font-size:9px;color:#8a8a8a;">[1,5]</span>
<span class="t" style="left:534px;top:449px;font-size:12.3px;color:#17178f;">pH</span>
<div class="b inp" style="left:658px;top:444px;width:45px;height:23px;"></div>
<span class="t" style="left:683.32px;top:449px;font-size:12px;font-weight:bold;color:#000;">8,0</span>
<span class="t" style="left:705px;top:451px;font-size:9px;color:#8a8a8a;">[&gt;=7,2]</span>
<span class="t" style="left:534px;top:473px;font-size:12.3px;color:#17178f;">Conc. [10</span>
<span class="t" style="left:586.65px;top:470px;font-size:12.3px;color:#17178f;">6</span>
<span class="t" style="left:593.49px;top:473px;font-size:12.3px;color:#17178f;">/ml]</span>
<div class="b" style="left:630.4px;top:468px;width:22.5px;height:23px;background:#fff;border:1px solid #cfcfcf;border-radius:3.500px;"></div>
<svg class="b" style="left:633px;top:470px;" width="18" height="19" viewBox="0 0 18 19"><defs><linearGradient id="cg59" x1="0" y1="0" x2="1" y2="0"><stop offset="0" stop-color="#4f86f0"/><stop offset="0.300" stop-color="#8cb6fa"/><stop offset="0.700" stop-color="#6a9cf6"/><stop offset="1" stop-color="#3468ea"/></linearGradient></defs><rect x="0" y="0" width="18" height="19" fill="url(#cg59)"/><rect x="17" y="0" width="1" height="19" fill="#1a3a7c"/><rect x="2.200" y="1.300" width="13.800" height="4.500" fill="#1e3a6e"/><rect x="3.200" y="2.300" width="12" height="3" fill="#86d878"/><rect x="2.8" y="6.8" width="2.200" height="2.200" fill="#0c2a9c"/><rect x="2.8" y="6.8" width="1" height="1" fill="#7ad8ff"/><rect x="5.8" y="6.8" width="2.200" height="2.200" fill="#0c2a9c"/><rect x="5.8" y="6.8" width="1" height="1" fill="#7ad8ff"/><rect x="8.8" y="6.8" width="2.200" height="2.200" fill="#0c2a9c"/><rect x="8.8" y="6.8" width="1" height="1" fill="#7ad8ff"/><rect x="12.9" y="6.8" width="2.200" height="2.200" fill="#d81808"/><rect x="2.8" y="9.8" width="2.200" height="2.200" fill="#0c2a9c"/><rect x="2.8" y="9.8" width="1" height="1" fill="#7ad8ff"/><rect x="5.8" y="9.8" width="2.200" height="2.200" fill="#0c2a9c"/><rect x="5.8" y="9.8" width="1" height="1" fill="#7ad8ff"/><rect x="8.8" y="9.8" width="2.200" height="2.200" fill="#0c2a9c"/><rect x="8.8" y="9.8" width="1" height="1" fill="#7ad8ff"/><rect x="12.9" y="9.8" width="2.200" height="2.200" fill="#0c2a9c"/><rect x="12.9" y="9.8" width="1" height="1" fill="#7ad8ff"/><rect x="2.8" y="12.8" width="2.200" height="2.200" fill="#0c2a9c"/><rect x="2.8" y="12.8" width="1" height="1" fill="#7ad8ff"/><rect x="5.8" y="12.8" width="2.200" height="2.200" fill="#0c2a9c"/><rect x="5.8" y="12.8" width="1" height="1" fill="#7ad8ff"/><rect x="8.8" y="12.8" width="2.200" height="2.200" fill="#0c2a9c"/><rect x="8.8" y="12.8" width="1" height="1" fill="#7ad8ff"/><rect x="12.9" y="12.8" width="2.200" height="2.200" fill="#0c2a9c"/><rect x="12.9" y="12.8" width="1" height="1" fill="#7ad8ff"/><rect x="2.8" y="15.8" width="2.200" height="2.200" fill="#0c2a9c"/><rect x="2.8" y="15.8" width="1" height="1" fill="#7ad8ff"/><rect x="5.8" y="15.8" width="2.200" height="2.200" fill="#0c2a9c"/><rect x="5.8" y="15.8" width="1" height="1" fill="#7ad8ff"/><rect x="8.8" y="15.8" width="2.200" height="2.200" fill="#0c2a9c"/><rect x="8.8" y="15.8" width="1" height="1" fill="#7ad8ff"/><rect x="12.9" y="15.8" width="2.200" height="2.200" fill="#0e8a10"/></svg>
<div class="b inp" style="left:658px;top:468px;width:45px;height:23px;"></div>
<span class="t" style="left:686.65px;top:473px;font-size:12px;font-weight:bold;color:#000;">15</span>
<span class="t" style="left:705px;top:475px;font-size:9px;color:#8a8a8a;">[15]</span>
<span class="t" style="left:619px;top:495px;font-size:12.3px;letter-spacing:-0.13px;color:#17178f;">Conc. &lt; 0.1</span>
<div class="b" style="left:692.2px;top:494.2px;width:12.8px;height:12.8px;background:linear-gradient(135deg,#8c8c8c 0%,#c4c4c4 20%,#efefef 40%,#fff 54%);border:1px solid #666;border-radius:3px;"></div>
<span class="t" style="left:534px;top:518px;font-size:12.3px;color:#17178f;">Vitalità [%]</span>
<div class="b inp" style="left:658px;top:513px;width:45px;height:23px;"></div>
<span class="t" style="left:686.65px;top:518px;font-size:12px;font-weight:bold;color:#000;">58</span>
<span class="t" style="left:705px;top:520px;font-size:9px;color:#8a8a8a;">[58]</span>
<span class="t" style="left:534px;top:542px;font-size:12.3px;color:#17178f;">Leucociti [10</span>
<span class="t" style="left:603.06px;top:539px;font-size:12.3px;color:#17178f;">6</span>
<span class="t" style="left:609.9px;top:542px;font-size:12.3px;color:#17178f;">/ml]</span>
<div class="b inp" style="left:658px;top:537px;width:45px;height:23px;"></div>
<span class="t" style="left:534px;top:566px;font-size:12.3px;color:#17178f;">Cell. rotonde [10</span>
<span class="t" style="left:624.26px;top:563px;font-size:12.3px;color:#17178f;">6</span>
<span class="t" style="left:631.1px;top:566px;font-size:12.3px;color:#17178f;">/ml]</span>
<div class="b inp" style="left:658px;top:561px;width:45px;height:23px;"></div>
<span class="t" style="left:534px;top:594px;font-size:12.3px;color:#17178f;text-decoration:underline;">Motilità</span>
<div class="b" style="left:669.5px;top:610px;width:22.5px;height:23px;background:#fff;border:1px solid #cfcfcf;border-radius:3.500px;"></div>
<svg class="b" style="left:672.1px;top:612px;" width="18" height="19" viewBox="0 0 18 19"><defs><linearGradient id="cg60" x1="0" y1="0" x2="1" y2="0"><stop offset="0" stop-color="#4f86f0"/><stop offset="0.300" stop-color="#8cb6fa"/><stop offset="0.700" stop-color="#6a9cf6"/><stop offset="1" stop-color="#3468ea"/></linearGradient></defs><rect x="0" y="0" width="18" height="19" fill="url(#cg60)"/><rect x="17" y="0" width="1" height="19" fill="#1a3a7c"/><rect x="2.200" y="1.300" width="13.800" height="4.500" fill="#1e3a6e"/><rect x="3.200" y="2.300" width="12" height="3" fill="#86d878"/><rect x="2.8" y="6.8" width="2.200" height="2.200" fill="#0c2a9c"/><rect x="2.8" y="6.8" width="1" height="1" fill="#7ad8ff"/><rect x="5.8" y="6.8" width="2.200" height="2.200" fill="#0c2a9c"/><rect x="5.8" y="6.8" width="1" height="1" fill="#7ad8ff"/><rect x="8.8" y="6.8" width="2.200" height="2.200" fill="#0c2a9c"/><rect x="8.8" y="6.8" width="1" height="1" fill="#7ad8ff"/><rect x="12.9" y="6.8" width="2.200" height="2.200" fill="#d81808"/><rect x="2.8" y="9.8" width="2.200" height="2.200" fill="#0c2a9c"/><rect x="2.8" y="9.8" width="1" height="1" fill="#7ad8ff"/><rect x="5.8" y="9.8" width="2.200" height="2.200" fill="#0c2a9c"/><rect x="5.8" y="9.8" width="1" height="1" fill="#7ad8ff"/><rect x="8.8" y="9.8" width="2.200" height="2.200" fill="#0c2a9c"/><rect x="8.8" y="9.8" width="1" height="1" fill="#7ad8ff"/><rect x="12.9" y="9.8" width="2.200" height="2.200" fill="#0c2a9c"/><rect x="12.9" y="9.8" width="1" height="1" fill="#7ad8ff"/><rect x="2.8" y="12.8" width="2.200" height="2.200" fill="#0c2a9c"/><rect x="2.8" y="12.8" width="1" height="1" fill="#7ad8ff"/><rect x="5.8" y="12.8" width="2.200" height="2.200" fill="#0c2a9c"/><rect x="5.8" y="12.8" width="1" height="1" fill="#7ad8ff"/><rect x="8.8" y="12.8" width="2.200" height="2.200" fill="#0c2a9c"/><rect x="8.8" y="12.8" width="1" height="1" fill="#7ad8ff"/><rect x="12.9" y="12.8" width="2.200" height="2.200" fill="#0c2a9c"/><rect x="12.9" y="12.8" width="1" height="1" fill="#7ad8ff"/><rect x="2.8" y="15.8" width="2.200" height="2.200" fill="#0c2a9c"/><rect x="2.8" y="15.8" width="1" height="1" fill="#7ad8ff"/><rect x="5.8" y="15.8" width="2.200" height="2.200" fill="#0c2a9c"/><rect x="5.8" y="15.8" width="1" height="1" fill="#7ad8ff"/><rect x="8.8" y="15.8" width="2.200" height="2.200" fill="#0c2a9c"/><rect x="8.8" y="15.8" width="1" height="1" fill="#7ad8ff"/><rect x="12.9" y="15.8" width="2.200" height="2.200" fill="#0e8a10"/></svg>
<span class="t" style="left:544px;top:641px;font-size:12.3px;letter-spacing:-0.44px;color:#17178f;">WHO AB [%]</span>
<div class="b inp" style="left:658px;top:636px;width:45px;height:23px;"></div>
<span class="t" style="left:679.98px;top:641px;font-size:12px;font-weight:bold;color:#000;">100</span>
<span class="t" style="left:544px;top:665px;font-size:12.3px;letter-spacing:-0.28px;color:#17178f;">WHO C [%]</span>
<div class="b inp" style="left:658px;top:660px;width:45px;height:23px;"></div>
<span class="t" style="left:544px;top:689px;font-size:12.3px;letter-spacing:-0.28px;color:#17178f;">WHO D [%]</span>
<div class="b inp" style="left:658px;top:684px;width:45px;height:23px;"></div>
<span class="t" style="left:634.5px;top:709px;font-size:11px;letter-spacing:-0.36px;color:#1f8a1f;">Somma:100%</span>
<span class="t" style="left:534px;top:720px;font-size:11px;letter-spacing:-0.2px;color:#17178f;">N. spermatozoi a mot.</span>
<span class="t" style="left:534px;top:737px;font-size:11px;color:#17178f;">prog. [10</span>
<span class="t" style="left:577.42px;top:734px;font-size:11px;color:#17178f;">6</span>
<span class="t" style="left:583.54px;top:737px;font-size:11px;color:#17178f;">]</span>
<div class="b dis" style="left:658px;top:723px;width:45px;height:23px;"></div>
<span class="t" style="left:676.64px;top:729px;font-size:12px;font-weight:bold;color:#777;">22,5</span>
<span class="t" style="left:534px;top:754px;font-size:11px;letter-spacing:-0.21px;color:#17178f;">Motilità compless.</span>
<span class="t" style="left:534px;top:767px;font-size:11px;color:#17178f;">[A% + B% + C%]</span>
<div class="b dis" style="left:658px;top:752px;width:45px;height:23px;"></div>
<span class="t" style="left:679.98px;top:758px;font-size:12px;font-weight:bold;color:#777;">100</span>
<span class="t" style="left:705px;top:760px;font-size:9px;color:#8a8a8a;">[40]</span>
<span class="t" style="left:760.2px;top:425px;font-size:12.3px;color:#17178f;">Possibile quantif.?</span>
<div class="b inp" style="left:928px;top:420px;width:99px;height:23px;"></div>
<div class="b" style="left:929px;top:421px;width:80.500px;height:20px;overflow:hidden;">
<span class="t" style="left:1.5px;top:4px;font-size:12px;font-weight:bold;">Non specificato</span>
</div>
<svg class="b" style="left:1013.5px;top:428.3px;" width="10" height="6" viewBox="0 0 10 6"><path d="M0.800 0.800L5 5L9.200 0.800" fill="none" stroke="#3c3c3c" stroke-width="1.050"/></svg>
<span class="t" style="left:760.2px;top:473px;font-size:12.3px;color:#17178f;">Numero totale spermatozoi [10</span>
<span class="t" style="left:928.39px;top:470px;font-size:12.3px;color:#17178f;">6</span>
<span class="t" style="left:935.23px;top:473px;font-size:12.3px;color:#17178f;">]</span>
<div class="b dis" style="left:982px;top:468px;width:45px;height:23px;"></div>
<span class="t" style="left:1000.94px;top:473px;font-size:12px;font-weight:bold;color:#777;">22,5</span>
<span class="t" style="left:1029.5px;top:475px;font-size:9px;color:#8a8a8a;">[39]</span>
<span class="t" style="left:760.2px;top:497px;font-size:12.3px;letter-spacing:0.11px;color:#17178f;">Cell. perossidasi-positive [10</span>
<span class="t" style="left:920.18px;top:494px;font-size:12.3px;color:#17178f;">6</span>
<span class="t" style="left:927.13px;top:497px;font-size:12.3px;letter-spacing:0.11px;color:#17178f;">/ml]</span>
<div class="b inp" style="left:982px;top:492px;width:45px;height:23px;"></div>
<span class="t" style="left:1029.5px;top:500px;font-size:9px;color:#8a8a8a;">[&lt;1]</span>
<span class="t" style="left:760.2px;top:521px;font-size:12.3px;letter-spacing:0.07px;color:#17178f;">Immunobead test [% adese]</span>
<div class="b inp" style="left:982px;top:516px;width:45px;height:23px;"></div>
<span class="t" style="left:1029.5px;top:523px;font-size:9px;color:#8a8a8a;">[&lt;50]</span>
<span class="t" style="left:902.63px;top:544px;font-size:11px;color:#17178f;">adese</span>
<span class="t" style="left:960.27px;top:544px;font-size:11px;color:#17178f;">IgG</span>
<span class="t" style="left:1008.09px;top:544px;font-size:11px;color:#17178f;">IgA</span>
<span class="t" style="left:760.2px;top:561px;font-size:12.3px;letter-spacing:-0.31px;color:#17178f;">MAR test [%]</span>
<div class="b inp" style="left:888px;top:558px;width:45px;height:23px;"></div>
<div class="b inp" style="left:935px;top:558px;width:45px;height:23px;"></div>
<div class="b inp" style="left:982px;top:558px;width:45px;height:23px;"></div>
<span class="t" style="left:1029.5px;top:564px;font-size:9px;color:#8a8a8a;">[&lt;50]</span>
<span class="t" style="left:760.2px;top:594px;font-size:12.3px;color:#17178f;text-decoration:underline;">Morfologia</span>
<span class="t" style="left:771px;top:617px;font-size:12.3px;color:#17178f;">Forme normali [%]</span>
<div class="b" style="left:954.8px;top:612px;width:22.5px;height:23px;background:#fff;border:1px solid #cfcfcf;border-radius:3.500px;"></div>
<svg class="b" style="left:957.4px;top:614px;" width="18" height="19" viewBox="0 0 18 19"><defs><linearGradient id="cg62" x1="0" y1="0" x2="1" y2="0"><stop offset="0" stop-color="#4f86f0"/><stop offset="0.300" stop-color="#8cb6fa"/><stop offset="0.700" stop-color="#6a9cf6"/><stop offset="1" stop-color="#3468ea"/></linearGradient></defs><rect x="0" y="0" width="18" height="19" fill="url(#cg62)"/><rect x="17" y="0" width="1" height="19" fill="#1a3a7c"/><rect x="2.200" y="1.300" width="13.800" height="4.500" fill="#1e3a6e"/><rect x="3.200" y="2.300" width="12" height="3" fill="#86d878"/><rect x="2.8" y="6.8" width="2.200" height="2.200" fill="#0c2a9c"/><rect x="2.8" y="6.8" width="1" height="1" fill="#7ad8ff"/><rect x="5.8" y="6.8" width="2.200" height="2.200" fill="#0c2a9c"/><rect x="5.8" y="6.8" width="1" height="1" fill="#7ad8ff"/><rect x="8.8" y="6.8" width="2.200" height="2.200" fill="#0c2a9c"/><rect x="8.8" y="6.8" width="1" height="1" fill="#7ad8ff"/><rect x="12.9" y="6.8" width="2.200" height="2.200" fill="#d81808"/><rect x="2.8" y="9.8" width="2.200" height="2.200" fill="#0c2a9c"/><rect x="2.8" y="9.8" width="1" height="1" fill="#7ad8ff"/><rect x="5.8" y="9.8" width="2.200" height="2.200" fill="#0c2a9c"/><rect x="5.8" y="9.8" width="1" height="1" fill="#7ad8ff"/><rect x="8.8" y="9.8" width="2.200" height="2.200" fill="#0c2a9c"/><rect x="8.8" y="9.8" width="1" height="1" fill="#7ad8ff"/><rect x="12.9" y="9.8" width="2.200" height="2.200" fill="#0c2a9c"/><rect x="12.9" y="9.8" width="1" height="1" fill="#7ad8ff"/><rect x="2.8" y="12.8" width="2.200" height="2.200" fill="#0c2a9c"/><rect x="2.8" y="12.8" width="1" height="1" fill="#7ad8ff"/><rect x="5.8" y="12.8" width="2.200" height="2.200" fill="#0c2a9c"/><rect x="5.8" y="12.8" width="1" height="1" fill="#7ad8ff"/><rect x="8.8" y="12.8" width="2.200" height="2.200" fill="#0c2a9c"/><rect x="8.8" y="12.8" width="1" height="1" fill="#7ad8ff"/><rect x="12.9" y="12.8" width="2.200" height="2.200" fill="#0c2a9c"/><rect x="12.9" y="12.8" width="1" height="1" fill="#7ad8ff"/><rect x="2.8" y="15.8" width="2.200" height="2.200" fill="#0c2a9c"/><rect x="2.8" y="15.8" width="1" height="1" fill="#7ad8ff"/><rect x="5.8" y="15.8" width="2.200" height="2.200" fill="#0c2a9c"/><rect x="5.8" y="15.8" width="1" height="1" fill="#7ad8ff"/><rect x="8.8" y="15.8" width="2.200" height="2.200" fill="#0c2a9c"/><rect x="8.8" y="15.8" width="1" height="1" fill="#7ad8ff"/><rect x="12.9" y="15.8" width="2.200" height="2.200" fill="#0e8a10"/></svg>
<div class="b inp" style="left:982px;top:612px;width:45px;height:23px;"></div>
<span class="t" style="left:1029.5px;top:619px;font-size:9px;color:#8a8a8a;">[4]</span>
<span class="t" style="left:771px;top:641px;font-size:12.3px;color:#17178f;">Difetti testa [%]</span>
<div class="b inp" style="left:982px;top:636px;width:45px;height:23px;"></div>
<span class="t" style="left:771px;top:665px;font-size:12.3px;letter-spacing:-0.09px;color:#17178f;">Difetti collo e tratto interm. [%]</span>
<div class="b inp" style="left:982px;top:660px;width:45px;height:23px;"></div>
<span class="t" style="left:771px;top:689px;font-size:12.3px;color:#17178f;">Difetti flagello [%]</span>
<div class="b inp" style="left:982px;top:684px;width:45px;height:23px;"></div>
<span class="t" style="left:771px;top:713px;font-size:12.3px;color:#17178f;">Droplets citopl. [%]</span>
<div class="b inp" style="left:982px;top:708px;width:45px;height:23px;"></div>
<span class="t" style="left:771px;top:737px;font-size:12.3px;color:#17178f;">Difetti multipli [%]</span>
<div class="b inp" style="left:982px;top:733px;width:45px;height:23px;"></div>
<span class="t" style="left:771px;top:761px;font-size:12.3px;color:#17178f;">Teratozoospermia (TZI)</span>
<div class="b inp" style="left:982px;top:756px;width:45px;height:23px;"></div>
<div class="b" style="left:1348px;top:160px;width:56.5px;height:36px;background:#fff;border:1px solid #bdbdbd;border-radius:4px;"></div>
<div class="b" style="left:1405.5px;top:160px;width:12px;height:36px;background:#fff;border:1px solid #cfcfcf;border-radius:3px;"></div>
<svg class="b" style="left:1407.8px;top:175.5px;" width="7" height="4" viewBox="0 0 7 4"><path d="M0 0H7L3.500 4Z" fill="#000"/></svg>
<svg class="b" style="left:1351px;top:165.8px;" width="53" height="28" viewBox="0 0 53 28">
<g fill="#29197c">
<path d="M9.500 0.600C4 0.200 0.300 4.500 0.300 9.500C0.300 13.500 2.200 16.200 5 17.600L6.200 19.600L2.800 23.800L3.800 24.600L7.200 21.200C8.500 23.300 11 24.200 13.500 23.800L16 22L20 22.500L24 23L25.500 21L26.500 24L27.500 23.600L26 19.500L24 8L27.500 4.500C26 1.500 22.500 0.300 19 1C16.500 0.200 12.500 0.200 9.500 0.600Z"/>
</g>
<path d="M15.500 4.800C12 6.500 9.500 9 8.200 12.500L9.500 15.300L7.500 17.500C8 20.500 10 22.800 13 22.800C15.500 22.800 17 21.500 17.300 19.300L18.800 18.800L18.300 17.300L19.600 16.600L18.800 15L20.800 13.800C20.300 12 19 11 19.200 8.500C19 6.500 17.500 5 15.500 4.800Z" fill="#ececec"/>
<path d="M23.500 4.300C22 5 20.800 6 20.300 7.500C20.500 9.500 21.500 11 22 13.500L20.200 15L21 16.700L19.800 17.500L20.200 19L18.600 19.700C18.300 21 17.800 22 17 22.600C18.500 23.200 21.500 23 23 21.800C24.300 20.800 24.800 19.800 24.800 18.800L26.300 18.300L25.800 16.800L27 16.200L26.300 14.600L28.300 13.500C27.800 11.500 26.500 10.500 26.800 8C26.600 6 25.300 4.500 23.500 4.300Z" fill="#ececec" stroke="#29197c" stroke-width="0.700"/>
<circle cx="16.300" cy="8.300" r="0.900" fill="#29197c"/><circle cx="23.800" cy="8.100" r="0.900" fill="#29197c"/>
<g>
<path d="M39.500 3.500V1.200H45.500V3.500" fill="#6a7af0" stroke="#2222a8" stroke-width="0.800"/>
<path d="M40.300 3.500V10L34.500 22.500Q33.800 25.800 37 25.800H48.500Q51.500 25.800 50.500 22.500L44.700 10V3.500Z" fill="#dcdcdc" stroke="#555" stroke-width="0.700"/>
<path d="M38.800 14.500H46.300L50 22.500Q50.600 25 48.500 25H37Q34.800 25 35.500 22.500Z" fill="#1c20e8"/>
<path d="M35.500 23.500H50.300L50 25.300H36Z" fill="#7080f4"/>
<path d="M31 5L35 1.800L52 22.500V24.500L49.500 24.800Z" fill="#fff" stroke="#1a1a90" stroke-width="0.900"/>
<path d="M40 10L42.500 8L52 19.500V23.500L50 24.500Z" fill="#b00018"/>
<path d="M40.600 13L42.300 11.800L50.500 22L49.600 24.200Z" fill="#f020c0"/>
<path d="M31 5L35 1.800L36.500 3.500L32.500 6.800Z" fill="#fff" stroke="#111" stroke-width="0.700"/>
<circle cx="49.800" cy="3.800" r="1.900" fill="none" stroke="#3f8a4a" stroke-width="0.900"/><circle cx="33.500" cy="13.800" r="2.300" fill="none" stroke="#3f8a4a" stroke-width="0.900"/><path d="M51.800 8.500V10" stroke="#3f8a4a" stroke-width="0.900"/>
</g></svg>
<div class="b" style="left:1348px;top:203.6px;width:70.5px;height:50.4px;background:#fff;border:1px solid #e2e2e2;border-bottom:1px solid #9a9a9a;border-radius:3px;"></div>
<svg class="b" style="left:1355.41px;top:201.41px;" width="53.98" height="53.98" viewBox="0 0 53.98 53.98"><g transform="translate(26.99,26.99)" fill="none" stroke-linecap="round" stroke-linejoin="round"><path transform="translate(1.3,1.3)" d="M0 0L0.00 -20.30M0.00 -11.49L7.95 -15.55M0.00 -11.49L-7.95 -15.55M0 0L-19.87 -10.15M-11.24 -5.74L-11.24 -13.86M-11.24 -5.74L-19.19 -1.68M0 0L-19.87 10.15M-11.24 5.74L-19.19 1.68M-11.24 5.74L-11.24 13.86M0 0L-0.00 20.30M-0.00 11.49L-7.95 15.55M-0.00 11.49L7.95 15.55M0 0L19.87 10.15M11.24 5.74L11.24 13.86M11.24 5.74L19.19 1.68M0 0L19.87 -10.15M11.24 -5.74L19.19 -1.68M11.24 -5.74L11.24 -13.86" stroke="#7b7f85" stroke-width="4.1" opacity="1"/><path d="M0 0L0.00 -20.30M0.00 -11.49L7.95 -15.55M0.00 -11.49L-7.95 -15.55M0 0L-19.87 -10.15M-11.24 -5.74L-11.24 -13.86M-11.24 -5.74L-19.19 -1.68M0 0L-19.87 10.15M-11.24 5.74L-19.19 1.68M-11.24 5.74L-11.24 13.86M0 0L-0.00 20.30M-0.00 11.49L-7.95 15.55M-0.00 11.49L7.95 15.55M0 0L19.87 10.15M11.24 5.74L11.24 13.86M11.24 5.74L19.19 1.68M0 0L19.87 -10.15M11.24 -5.74L19.19 -1.68M11.24 -5.74L11.24 -13.86" stroke="#86b5ec" stroke-width="4.1"/><path d="M0 0L0.00 -20.30M0.00 -11.49L7.95 -15.55M0.00 -11.49L-7.95 -15.55M0 0L-19.87 -10.15M-11.24 -5.74L-11.24 -13.86M-11.24 -5.74L-19.19 -1.68M0 0L-19.87 10.15M-11.24 5.74L-19.19 1.68M-11.24 5.74L-11.24 13.86M0 0L-0.00 20.30M-0.00 11.49L-7.95 15.55M-0.00 11.49L7.95 15.55M0 0L19.87 10.15M11.24 5.74L11.24 13.86M11.24 5.74L19.19 1.68M0 0L19.87 -10.15M11.24 -5.74L19.19 -1.68M11.24 -5.74L11.24 -13.86" stroke="#f3f8fe" stroke-width="2.5"/></g></svg>
<div class="b" style="left:1349px;top:260px;width:69px;height:93px;background:#fff;border:1px solid #7a7a7a;"></div>
<span class="t" style="left:1364.35px;top:271px;font-size:12.3px;letter-spacing:-0.16px;color:#17178f;">Naviga</span>
<div class="b" style="left:1357px;top:295px;width:54px;height:22px;background:#f8f8f8;border:1px solid #e6e6e6;border-radius:3px;"></div>
<svg class="b" style="left:1378px;top:297.5px;" width="11" height="16" viewBox="0 0 11 16"><path d="M5.500 0.800L9.800 8H7V15H4V8H1.200Z" fill="#fff" stroke="#555" stroke-width="0.900"/></svg>
<div class="b" style="left:1357px;top:320px;width:54px;height:22px;background:#fcfcfc;border:1px solid #cdcdcd;border-bottom-color:#b5b5b5;border-radius:3px;"></div>
<svg class="b" style="left:1378px;top:322.5px;" width="11" height="17" viewBox="0 0 11 17"><path d="M4 0.800H7V8H9.800L5.500 15.800L1.200 8H4Z" fill="#e8101a" stroke="#1a0000" stroke-width="0.900"/></svg>
<svg class="b" style="left:1076px;top:395px;" width="346" height="308" viewBox="0 0 346 308">
<path d="M165.600 23.500V8.500Q165.600 4 170 4H305.500Q309.700 4 309.700 8.500V23.500Z" fill="#f3f3f3" stroke="#2b3ea0"/>
<path d="M3.500 23.500H8L26 5.500Q28 3.600 30.500 3.600H161Q165.600 3.600 165.600 8V23.500H342.800V305H3.500Z" fill="#fff" stroke="#2b3ea0"/>
<path d="M8.500 23.500H165" stroke="#fff" stroke-width="1.500"/>
</svg>
<span class="t" style="left:1147.1px;top:404px;font-size:12px;letter-spacing:-0.26px;font-weight:bold;">Diagnosi</span>
<span class="t" style="left:1258px;top:404px;font-size:12px;letter-spacing:-0.14px;font-weight:bold;">Status approvazione</span>
<div class="b cmbr" style="left:1087px;top:428px;width:324px;height:23px;"></div>
<span class="t" style="left:1091px;top:434px;font-size:12px;letter-spacing:-0.13px;font-weight:bold;">Non Specificato</span>
<svg class="b" style="left:1397.5px;top:436.7px;" width="10" height="6" viewBox="0 0 10 6"><path d="M0.800 0.800L5 5L9.200 0.800" fill="none" stroke="#3c3c3c" stroke-width="1.050"/></svg>
<span class="t" style="left:1089.7px;top:462px;font-size:12.3px;color:#17178f;">Risultati</span>
<div class="b" style="left:1193.2px;top:459.8px;width:13px;height:13px;border-radius:50%;background:radial-gradient(circle at 40% 35%,#f4f4f4,#d2d2d2 70%,#c0c0c0);border:1px solid #a9a9a9;"></div>
<span class="t" style="left:1211.4px;top:461px;font-size:12px;letter-spacing:-0.12px;font-weight:bold;color:#17178f;">Normale</span>
<div class="b" style="left:1315.1px;top:459.8px;width:13px;height:13px;border-radius:50%;background:radial-gradient(circle at 40% 35%,#f4f4f4,#d2d2d2 70%,#c0c0c0);border:1px solid #a9a9a9;"></div>
<span class="t" style="left:1333px;top:461px;font-size:12px;letter-spacing:-0.09px;font-weight:bold;color:#17178f;">Anormale</span>
<span class="t" style="left:1089.2px;top:494px;font-size:12.3px;color:#17178f;">Note</span>
<div class="b" style="left:1088.4px;top:510.5px;width:323.5px;height:181.5px;background:#fff;border:1px solid #e8e8e8;border-bottom:1px solid #8a8a8a;border-radius:3px;"></div>
<div class="b" style="left:1390px;top:512px;width:21px;height:178.5px;background:#f1f1f1;"></div>
<svg class="b" style="left:1393.5px;top:517.5px;" width="9" height="6" viewBox="0 0 9 6"><path d="M0.500 5.500L4.500 0.500L8.500 5.500Z" fill="#a0a0a0"/></svg>
<svg class="b" style="left:1393.5px;top:680px;" width="9" height="6" viewBox="0 0 9 6"><path d="M0.500 0.500L4.500 5.500L8.500 0.500Z" fill="#a0a0a0"/></svg>
<span class="t" style="left:1081.8px;top:715px;font-size:12.3px;color:#17178f;">Tempo tra raccolta ed uso</span>
<div class="b inp" style="left:1343px;top:708px;width:75px;height:23px;"></div>
<span class="t" style="left:1346.6px;top:713px;font-size:12px;letter-spacing:-0.14px;font-weight:bold;">00:00</span>
<div class="b" style="left:1401px;top:710px;width:15px;height:9px;background:#e3e3e3;border:1px solid #adadad;"></div>
<svg class="b" style="left:1404.5px;top:712px;" width="8" height="5" viewBox="0 0 8 5"><path d="M0 4.600L4 0.400L8 4.600Z" fill="#000"/></svg>
<div class="b" style="left:1401px;top:720px;width:15px;height:9px;background:#e3e3e3;border:1px solid #adadad;"></div>
<svg class="b" style="left:1404.5px;top:722.4px;" width="8" height="5" viewBox="0 0 8 5"><path d="M0 0.200L4 4.400L8 0.200Z" fill="#000"/></svg>
<span class="t" style="left:1081.8px;top:739px;font-size:12.3px;color:#17178f;">N. sperm. mobili per inseminazione [x10</span>
<span class="t" style="left:1300.56px;top:736px;font-size:12.3px;color:#17178f;">6</span>
<span class="t" style="left:1307.4px;top:739px;font-size:12.3px;color:#17178f;">]</span>
<div class="b inp" style="left:1343px;top:733px;width:75px;height:23px;"></div>
<span class="t" style="left:1081.8px;top:763px;font-size:12.3px;color:#17178f;">Volume inseminazione [ml]</span>
<div class="b inp" style="left:1343px;top:758px;width:75px;height:23px;"></div>
<span class="t" style="left:1081.8px;top:788px;font-size:12.3px;color:#17178f;">Motilità a 24h [%]</span>
<div class="b inp" style="left:1343px;top:783px;width:75px;height:23px;"></div>
<div class="b" style="left:494px;top:851px;width:197px;height:23px;background:#fdfdfd;border:1px solid #cfcfcf;border-bottom-color:#b9b9b9;border-radius:4px;"></div>
<svg class="b" style="left:548.5px;top:854.5px;" width="19" height="17" viewBox="0 0 19 17"><g fill="#fff" stroke="#000" stroke-width="1.300"><rect x="0.800" y="0.800" width="14.800" height="8"/><rect x="1.600" y="3.800" width="14.800" height="8"/><rect x="2.800" y="6.800" width="15" height="9"/></g><path d="M3 2.300H6M3.800 5.300H6.800" stroke="#1a1ab0" stroke-width="1"/><path d="M5 9.300H8M8.500 11.500H14.500M8.500 13.500H14.500" stroke="#1a1ab0" stroke-width="1"/><rect x="14.800" y="8.300" width="2" height="2" fill="#e81010"/><rect x="14" y="5" width="1.600" height="1.200" fill="#e81010"/><rect x="13.200" y="2" width="1.600" height="1.200" fill="#e81010"/></svg>
<span class="t" style="left:572px;top:856px;font-size:12.3px;letter-spacing:-0.06px;">Crea lettera</span>
<div class="b" style="left:699px;top:851px;width:183px;height:23px;background:#f7f7f7;border:1px solid #e6e6e6;border-radius:4px;"></div>
<span class="t" style="left:709.4px;top:856px;font-size:12.3px;letter-spacing:0px;color:#8a8a8a;">Single European Code (SEC)</span>
<div class="b" style="left:1204px;top:851px;width:103px;height:23px;background:#fdfdfd;border:1px solid #cfcfcf;border-bottom-color:#b9b9b9;border-radius:4px;"></div>
<svg class="b" style="left:1225.5px;top:854.5px;" width="15" height="15" viewBox="0 0 15 15"><path d="M1.500 1.800Q3 1 4.200 1.800L7.300 5.800Q10.500 2.500 13.800 0.800Q11 4.500 8.800 7.600L13.500 13.200L11.800 14.200L7.200 9.500Q5 12 3 14.200L1.200 13.500Q3.500 10.500 5.800 7.800L1.500 1.800Z" fill="#b8102e"/></svg>
<span class="t" style="left:1246px;top:856px;font-size:12.3px;letter-spacing:0px;">Annulla</span>
<div class="b" style="left:1318px;top:851px;width:103px;height:23px;background:#fdfdfd;border:1px solid #cfcfcf;border-bottom-color:#b9b9b9;border-radius:4px;"></div>
<svg class="b" style="left:1349.5px;top:854.5px;" width="19" height="15" viewBox="0 0 19 15"><path d="M0.800 8.200Q2.500 6.800 4 7.200L6.800 10.200Q11 4 17.800 0.800Q12 6.500 7.500 14.200Q6.500 14.500 5.800 13.800Z" fill="#1f8f24" stroke="#157018" stroke-width="0.500"/></svg>
<span class="t" style="left:1372px;top:856px;font-size:12.3px;letter-spacing:-0.14px;">OK</span>
</body></html>
